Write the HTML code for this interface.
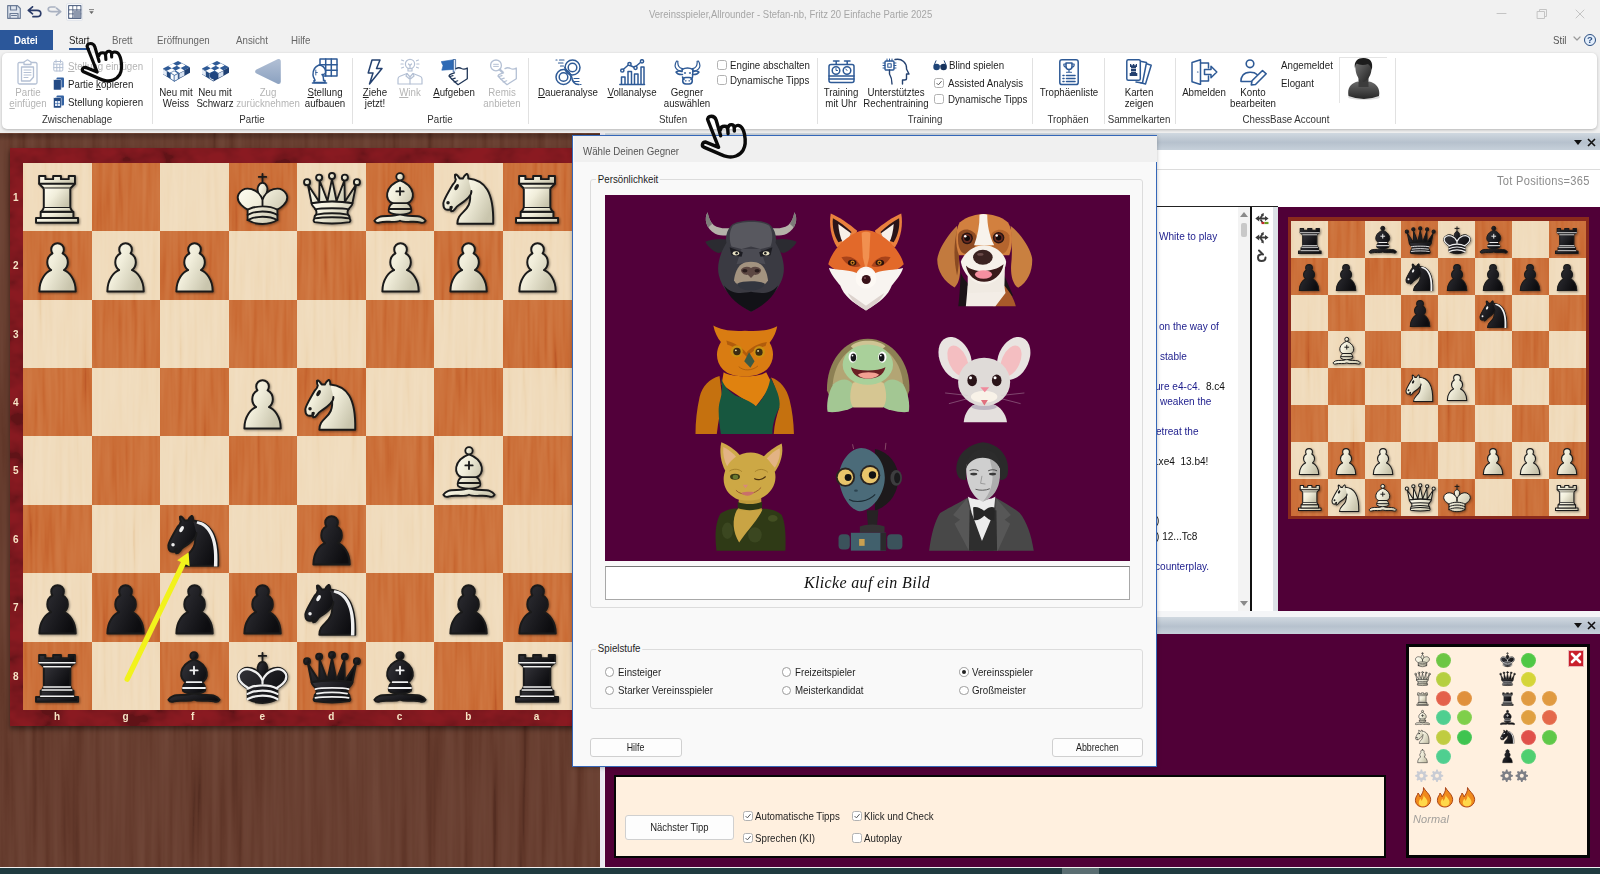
<!DOCTYPE html><html lang="de"><head><meta charset="utf-8"><title>Fritz 20</title><style>
*{box-sizing:border-box}
html,body{margin:0;padding:0;overflow:hidden}
body{width:1600px;height:874px;overflow:hidden;position:relative;background:#f0f0f0;font-family:"Liberation Sans",sans-serif;font-size:11px;color:#1e1e1e}
.a{position:absolute}
.t{position:absolute;white-space:nowrap;line-height:12px;font-size:10.5px;transform-origin:0 50%;transform:scaleX(.925)}
.c{position:absolute;white-space:nowrap;text-align:center;line-height:10.6px;font-size:10.5px;transform:translateX(-50%) scaleX(.925)}
.g{color:#b4b4b4}
.pc{position:absolute;filter:drop-shadow(1px 1.5px 1px rgba(0,0,0,.4))}
.sep{position:absolute;top:58px;width:1px;height:66px;background:#e1e1e1}
.cb{position:absolute;width:10px;height:10px;border:1px solid #9a9a9a;border-radius:2.5px;background:#fff}
.rd{position:absolute;width:9.5px;height:9.5px;border:1px solid #9c9c9c;border-radius:50%;background:#fff}
.btn{position:absolute;border:1px solid #d0d0d0;border-radius:3px;background:#fdfdfd;text-align:center;font-size:10.5px}
.btn span{display:inline-block;transform:scaleX(.84)}
.lab{position:absolute;color:#f6e4c6;font-size:10px;line-height:12px;font-weight:bold}
.nt{position:absolute;white-space:nowrap;font-size:11.5px;line-height:13px;color:#1c1c8c;transform-origin:0 50%;transform:scaleX(.875)}
.hdr{position:absolute;background:linear-gradient(#d0d8e0,#b6c1cd 55%,#c6d0da)}
</style></head><body>
<svg width="0" height="0" style="position:absolute"><defs>
<linearGradient id="wg" x1="0" y1="0" x2="1" y2=".6"><stop offset="0" stop-color="#fffdf2"/><stop offset=".45" stop-color="#f1eedb"/><stop offset="1" stop-color="#c9c5ad"/></linearGradient>
<linearGradient id="kg" x1="0" y1="0" x2="1" y2=".6"><stop offset="0" stop-color="#34343a"/><stop offset="1" stop-color="#0d0d10"/></linearGradient>
<filter id="grain" x="0" y="0" width="100%" height="100%"><feTurbulence type="fractalNoise" baseFrequency="0.11 0.004" numOctaves="3" seed="4"/><feColorMatrix type="matrix" values="1.6 0 0 0 -.3  1.6 0 0 0 -.3  1.6 0 0 0 -.3  0 0 0 0 1"/></filter>
<filter id="grain2" x="0" y="0" width="100%" height="100%"><feTurbulence type="fractalNoise" baseFrequency="0.2 0.012" numOctaves="2" seed="9"/><feColorMatrix type="matrix" values="1.4 0 0 0 -.2  1.4 0 0 0 -.2  1.4 0 0 0 -.2  0 0 0 0 1"/></filter>
<filter id="mottle" x="0" y="0" width="100%" height="100%"><feTurbulence type="fractalNoise" baseFrequency="0.035 0.05" numOctaves="3" seed="7"/><feColorMatrix type="matrix" values="2.2 0 0 0 -.6  2.2 0 0 0 -.6  2.2 0 0 0 -.6  0 0 0 0 1"/></filter>
</defs></svg>
<div class="a" id="wood" style="left:0;top:133px;width:604px;height:734px;background:#62382a"></div>
<div class="a" style="left:0;top:133.5px;width:600px;height:7px;background:linear-gradient(rgba(0,0,0,.28),rgba(0,0,0,0))"></div>
<svg class="a" style="left:0;top:133px;mix-blend-mode:soft-light;opacity:.22" width="604" height="734"><rect width="604" height="734" filter="url(#grain)"/></svg>
<div class="a" style="left:600px;top:133px;width:4.2px;height:734px;background:#ebe9f2"></div>
<div class="a" id="purple" style="left:604.5px;top:133px;width:996px;height:734px;background:#500037"></div>
<div class="a" style="left:0;top:867.5px;width:1600px;height:7px;background:#1f3b40"></div>
<div class="a" style="left:1062px;top:867.5px;width:37px;height:7px;background:#5a6e72"></div>
<div class="a" id="frame" style="left:9.6px;top:147.6px;width:574.7px;height:578.2px;background:#8a1a21;box-shadow:0 3px 5px rgba(0,0,0,.45)"></div>
<svg class="a" style="left:10.3px;top:147.6px;mix-blend-mode:multiply;opacity:.3" width="574" height="578.2"><rect width="574" height="578.2" filter="url(#mottle)"/></svg>
<div class="a" style="left:23.00px;top:162.70px;width:68.85px;height:68.72px;background:#efd9b8"></div><div class="a" style="left:91.55px;top:162.70px;width:68.85px;height:68.72px;background:#c96a33"></div><div class="a" style="left:160.10px;top:162.70px;width:68.85px;height:68.72px;background:#efd9b8"></div><div class="a" style="left:228.65px;top:162.70px;width:68.85px;height:68.72px;background:#c96a33"></div><div class="a" style="left:297.20px;top:162.70px;width:68.85px;height:68.72px;background:#efd9b8"></div><div class="a" style="left:365.75px;top:162.70px;width:68.85px;height:68.72px;background:#c96a33"></div><div class="a" style="left:434.30px;top:162.70px;width:68.85px;height:68.72px;background:#efd9b8"></div><div class="a" style="left:502.85px;top:162.70px;width:68.85px;height:68.72px;background:#c96a33"></div><div class="a" style="left:23.00px;top:231.12px;width:68.85px;height:68.72px;background:#c96a33"></div><div class="a" style="left:91.55px;top:231.12px;width:68.85px;height:68.72px;background:#efd9b8"></div><div class="a" style="left:160.10px;top:231.12px;width:68.85px;height:68.72px;background:#c96a33"></div><div class="a" style="left:228.65px;top:231.12px;width:68.85px;height:68.72px;background:#efd9b8"></div><div class="a" style="left:297.20px;top:231.12px;width:68.85px;height:68.72px;background:#c96a33"></div><div class="a" style="left:365.75px;top:231.12px;width:68.85px;height:68.72px;background:#efd9b8"></div><div class="a" style="left:434.30px;top:231.12px;width:68.85px;height:68.72px;background:#c96a33"></div><div class="a" style="left:502.85px;top:231.12px;width:68.85px;height:68.72px;background:#efd9b8"></div><div class="a" style="left:23.00px;top:299.54px;width:68.85px;height:68.72px;background:#efd9b8"></div><div class="a" style="left:91.55px;top:299.54px;width:68.85px;height:68.72px;background:#c96a33"></div><div class="a" style="left:160.10px;top:299.54px;width:68.85px;height:68.72px;background:#efd9b8"></div><div class="a" style="left:228.65px;top:299.54px;width:68.85px;height:68.72px;background:#c96a33"></div><div class="a" style="left:297.20px;top:299.54px;width:68.85px;height:68.72px;background:#efd9b8"></div><div class="a" style="left:365.75px;top:299.54px;width:68.85px;height:68.72px;background:#c96a33"></div><div class="a" style="left:434.30px;top:299.54px;width:68.85px;height:68.72px;background:#efd9b8"></div><div class="a" style="left:502.85px;top:299.54px;width:68.85px;height:68.72px;background:#c96a33"></div><div class="a" style="left:23.00px;top:367.96px;width:68.85px;height:68.72px;background:#c96a33"></div><div class="a" style="left:91.55px;top:367.96px;width:68.85px;height:68.72px;background:#efd9b8"></div><div class="a" style="left:160.10px;top:367.96px;width:68.85px;height:68.72px;background:#c96a33"></div><div class="a" style="left:228.65px;top:367.96px;width:68.85px;height:68.72px;background:#efd9b8"></div><div class="a" style="left:297.20px;top:367.96px;width:68.85px;height:68.72px;background:#c96a33"></div><div class="a" style="left:365.75px;top:367.96px;width:68.85px;height:68.72px;background:#efd9b8"></div><div class="a" style="left:434.30px;top:367.96px;width:68.85px;height:68.72px;background:#c96a33"></div><div class="a" style="left:502.85px;top:367.96px;width:68.85px;height:68.72px;background:#efd9b8"></div><div class="a" style="left:23.00px;top:436.38px;width:68.85px;height:68.72px;background:#efd9b8"></div><div class="a" style="left:91.55px;top:436.38px;width:68.85px;height:68.72px;background:#c96a33"></div><div class="a" style="left:160.10px;top:436.38px;width:68.85px;height:68.72px;background:#efd9b8"></div><div class="a" style="left:228.65px;top:436.38px;width:68.85px;height:68.72px;background:#c96a33"></div><div class="a" style="left:297.20px;top:436.38px;width:68.85px;height:68.72px;background:#efd9b8"></div><div class="a" style="left:365.75px;top:436.38px;width:68.85px;height:68.72px;background:#c96a33"></div><div class="a" style="left:434.30px;top:436.38px;width:68.85px;height:68.72px;background:#efd9b8"></div><div class="a" style="left:502.85px;top:436.38px;width:68.85px;height:68.72px;background:#c96a33"></div><div class="a" style="left:23.00px;top:504.80px;width:68.85px;height:68.72px;background:#c96a33"></div><div class="a" style="left:91.55px;top:504.80px;width:68.85px;height:68.72px;background:#efd9b8"></div><div class="a" style="left:160.10px;top:504.80px;width:68.85px;height:68.72px;background:#c96a33"></div><div class="a" style="left:228.65px;top:504.80px;width:68.85px;height:68.72px;background:#efd9b8"></div><div class="a" style="left:297.20px;top:504.80px;width:68.85px;height:68.72px;background:#c96a33"></div><div class="a" style="left:365.75px;top:504.80px;width:68.85px;height:68.72px;background:#efd9b8"></div><div class="a" style="left:434.30px;top:504.80px;width:68.85px;height:68.72px;background:#c96a33"></div><div class="a" style="left:502.85px;top:504.80px;width:68.85px;height:68.72px;background:#efd9b8"></div><div class="a" style="left:23.00px;top:573.22px;width:68.85px;height:68.72px;background:#efd9b8"></div><div class="a" style="left:91.55px;top:573.22px;width:68.85px;height:68.72px;background:#c96a33"></div><div class="a" style="left:160.10px;top:573.22px;width:68.85px;height:68.72px;background:#efd9b8"></div><div class="a" style="left:228.65px;top:573.22px;width:68.85px;height:68.72px;background:#c96a33"></div><div class="a" style="left:297.20px;top:573.22px;width:68.85px;height:68.72px;background:#efd9b8"></div><div class="a" style="left:365.75px;top:573.22px;width:68.85px;height:68.72px;background:#c96a33"></div><div class="a" style="left:434.30px;top:573.22px;width:68.85px;height:68.72px;background:#efd9b8"></div><div class="a" style="left:502.85px;top:573.22px;width:68.85px;height:68.72px;background:#c96a33"></div><div class="a" style="left:23.00px;top:641.64px;width:68.85px;height:68.72px;background:#c96a33"></div><div class="a" style="left:91.55px;top:641.64px;width:68.85px;height:68.72px;background:#efd9b8"></div><div class="a" style="left:160.10px;top:641.64px;width:68.85px;height:68.72px;background:#c96a33"></div><div class="a" style="left:228.65px;top:641.64px;width:68.85px;height:68.72px;background:#efd9b8"></div><div class="a" style="left:297.20px;top:641.64px;width:68.85px;height:68.72px;background:#c96a33"></div><div class="a" style="left:365.75px;top:641.64px;width:68.85px;height:68.72px;background:#efd9b8"></div><div class="a" style="left:434.30px;top:641.64px;width:68.85px;height:68.72px;background:#c96a33"></div><div class="a" style="left:502.85px;top:641.64px;width:68.85px;height:68.72px;background:#efd9b8"></div>
<svg class="a" style="left:23px;top:162.7px;mix-blend-mode:soft-light;opacity:.28" width="548.7" height="547.6"><rect width="548.7" height="547.6" filter="url(#grain2)"/></svg>
<div class="lab" style="left:13px;top:191.7px">1</div>
<div class="lab" style="left:13px;top:260.1px">2</div>
<div class="lab" style="left:13px;top:328.5px">3</div>
<div class="lab" style="left:13px;top:397.0px">4</div>
<div class="lab" style="left:13px;top:465.4px">5</div>
<div class="lab" style="left:13px;top:533.8px">6</div>
<div class="lab" style="left:13px;top:602.2px">7</div>
<div class="lab" style="left:13px;top:670.6px">8</div>
<div class="lab" style="left:54.0px;top:711px">h</div>
<div class="lab" style="left:122.5px;top:711px">g</div>
<div class="lab" style="left:191.1px;top:711px">f</div>
<div class="lab" style="left:259.6px;top:711px">e</div>
<div class="lab" style="left:328.2px;top:711px">d</div>
<div class="lab" style="left:396.8px;top:711px">c</div>
<div class="lab" style="left:465.3px;top:711px">b</div>
<div class="lab" style="left:533.8px;top:711px">a</div>
<svg class="pc" style="left:22.2px;top:162.4px" width="70.1" height="70.1" viewBox="0 0 45 45"><g fill="none" fill-rule="evenodd" stroke="#1a1a1a" stroke-width="1.25" stroke-linecap="round" stroke-linejoin="round" ><g fill="url(#wg)" stroke-linecap="butt"><path d="M 9,39 L 36,39 L 36,36 L 9,36 L 9,39 z"/><path d="M 12,36 L 12,32 L 33,32 L 33,36 L 12,36 z"/><path d="M 11,14 L 11,9 L 15,9 L 15,11 L 20,11 L 20,9 L 25,9 L 25,11 L 30,11 L 30,9 L 34,9 L 34,14"/><path d="M 34,14 L 31,17 L 14,17 L 11,14"/><path d="M 31,17 L 31,29.5 L 14,29.5 L 14,17" stroke-linejoin="miter"/><path d="M 31,29.5 L 32.5,32 L 12.5,32 L 14,29.5"/></g><path d="M 11,14 L 34,14" stroke-linejoin="miter"/></g></svg>
<svg class="pc" style="left:229.4px;top:164.9px" width="67.0" height="67.0" viewBox="0 0 45 45"><g fill="none" fill-rule="evenodd" stroke="#1a1a1a" stroke-width="1.25" stroke-linecap="round" stroke-linejoin="round" ><path d="M 22.5,11.63 L 22.5,6" stroke-linejoin="miter"/><path d="M 20,8 L 25,8" stroke-linejoin="miter"/><path d="M 22.5,25 C 22.5,25 27,17.5 25.5,14.5 C 25.5,14.5 24.5,12 22.5,12 C 20.5,12 19.5,14.5 19.5,14.5 C 18,17.5 22.5,25 22.5,25" fill="url(#wg)" stroke-linecap="butt" stroke-linejoin="miter"/><path d="M 12.5,37 C 18,40.5 27,40.5 32.5,37 L 32.5,30 C 32.5,30 41.5,25.5 38.5,19.5 C 34.5,13 25,16 22.5,23.5 L 22.5,27 L 22.5,23.5 C 20,16 10.5,13 6.5,19.5 C 3.5,25.5 12.5,30 12.5,30 L 12.5,37" fill="url(#wg)"/><path d="M 12.5,30 C 18,27 27,27 32.5,30"/><path d="M 12.5,33.5 C 18,30.5 27,30.5 32.5,33.5"/><path d="M 12.5,37 C 18,34 27,34 32.5,37"/></g></svg>
<svg class="pc" style="left:297.5px;top:163.6px" width="68.0" height="68.0" viewBox="0 0 45 45"><g fill="none" fill-rule="evenodd" stroke="#1a1a1a" stroke-width="1.25" stroke-linecap="round" stroke-linejoin="round" ><g fill="url(#wg)"><path d="M 9,26 C 17.5,24.5 30,24.5 36,26 L 38.5,13.5 L 31,25 L 30.7,10.9 L 25.5,24.5 L 22.5,10 L 19.5,24.5 L 14.3,10.9 L 14,25 L 6.5,13.5 L 9,26 z"/><path d="M 9,26 C 9,28 10.5,28 11.5,30 C 12.5,31.5 12.5,31 12,33.5 C 10.5,34.5 11,36 11,36 C 9.5,37.5 11,38.5 11,38.5 C 17.5,39.5 27.5,39.5 34,38.5 C 34,38.5 35.5,37.5 34,36 C 34,36 34.5,34.5 33,33.5 C 32.5,31 32.5,31.5 33.5,30 C 34.5,28 36,28 36,26 C 27.5,24.5 17.5,24.5 9,26 z"/><circle cx="6" cy="12" r="2"/><circle cx="14" cy="9" r="2"/><circle cx="22.5" cy="8" r="2"/><circle cx="31" cy="9" r="2"/><circle cx="39" cy="12" r="2"/></g><path d="M 11.5,30 C 15,29 30,29 33.5,30"/><path d="M 12,33.5 C 18,32.5 27,32.5 33,33.5"/><path d="M 11,36 C 17,35 28,35 34,36"/></g></svg>
<svg class="pc" style="left:367.0px;top:164.9px" width="66.0" height="66.0" viewBox="0 0 45 45"><g fill="none" fill-rule="evenodd" stroke="#1a1a1a" stroke-width="1.25" stroke-linecap="round" stroke-linejoin="round" ><g fill="url(#wg)" stroke-linecap="butt"><path d="M 8.5,35.3 C 12,34.1 19,35.8 22.5,33.2 C 26,35.8 33,34.1 36.5,35.3 C 38,35.8 39.3,36.8 40,38 C 39,39.7 37.5,39.7 36,39.1 C 32.5,37.9 26,39.7 22.5,38 C 19,39.7 12.5,37.9 9,39.1 C 7.5,39.7 6,39.7 5,38 C 5.7,36.8 7,35.8 8.5,35.3 z"/><path d="M 15,32 C 17.5,34.5 27.5,34.5 30,32 C 30.5,30.5 30,30 30,30 C 30,27.5 27.5,26 27.5,26 C 33,24.5 33.5,14.5 22.5,10.5 C 11.5,14.5 12,24.5 17.5,26 C 17.5,26 15,27.5 15,30 C 15,30 14.5,30.5 15,32 z"/><path d="M 25 8 A 2.5 2.5 0 1 1 20,8 A 2.5 2.5 0 1 1 25 8 z"/></g><path d="M 17.5,26 L 27.5,26 M 15,30 L 30,30 M 22.5,15.5 L 22.5,20.5 M 20,18 L 25,18" stroke="#1a1a1a" stroke-linejoin="miter"/></g></svg>
<svg class="pc" style="left:433.5px;top:163.2px" width="70.1" height="70.1" viewBox="0 0 45 45"><g fill="none" fill-rule="evenodd" stroke="#1a1a1a" stroke-width="1.25" stroke-linecap="round" stroke-linejoin="round" ><path d="M 22,10 C 32.5,11 38.5,18 38,39 L 15,39 C 15,30 25,32.5 23,18" fill="url(#wg)"/><path d="M 24,18 C 24.38,20.91 18.45,25.37 16,27 C 13,29 13.18,31.34 11,31 C 9.958,30.06 12.41,27.96 11,28 C 10,28 11.19,29.23 10,30 C 9,30 5.997,31 6,26 C 6,24 12,14 12,14 C 12,14 13.89,12.1 14,10.5 C 13.27,9.506 13.5,8.5 13.5,7.5 C 14.5,6.5 16.5,10 16.5,10 L 18.5,10 C 18.5,10 19.28,8.008 21,7 C 22,7 22,10 22,10" fill="url(#wg)"/><path d="M 9.5 25.5 A 0.5 0.5 0 1 1 8.5,25.5 A 0.5 0.5 0 1 1 9.5 25.5 z" fill="#1a1a1a" stroke="#1a1a1a"/><path d="M 15 15.5 A 0.5 1.5 0 1 1 14,15.5 A 0.5 1.5 0 1 1 15 15.5 z" transform="matrix(0.866,0.5,-0.5,0.866,9.693,-5.173)" fill="#1a1a1a" stroke="#1a1a1a"/></g></svg>
<svg class="pc" style="left:502.1px;top:162.4px" width="70.1" height="70.1" viewBox="0 0 45 45"><g fill="none" fill-rule="evenodd" stroke="#1a1a1a" stroke-width="1.25" stroke-linecap="round" stroke-linejoin="round" ><g fill="url(#wg)" stroke-linecap="butt"><path d="M 9,39 L 36,39 L 36,36 L 9,36 L 9,39 z"/><path d="M 12,36 L 12,32 L 33,32 L 33,36 L 12,36 z"/><path d="M 11,14 L 11,9 L 15,9 L 15,11 L 20,11 L 20,9 L 25,9 L 25,11 L 30,11 L 30,9 L 34,9 L 34,14"/><path d="M 34,14 L 31,17 L 14,17 L 11,14"/><path d="M 31,17 L 31,29.5 L 14,29.5 L 14,17" stroke-linejoin="miter"/><path d="M 31,29.5 L 32.5,32 L 12.5,32 L 14,29.5"/></g><path d="M 11,14 L 34,14" stroke-linejoin="miter"/></g></svg>
<svg class="pc" style="left:21.7px;top:228.7px" width="71.1" height="71.1" viewBox="0 0 45 45"><g fill="none" fill-rule="evenodd" stroke="#1a1a1a" stroke-width="1.25" stroke-linecap="round" stroke-linejoin="round" ><path d="m 22.5,9 c -2.21,0 -4,1.79 -4,4 0,0.89 0.29,1.71 0.78,2.38 C 17.33,16.5 16,18.59 16,21 c 0,2.03 0.94,3.84 2.41,5.03 C 15.41,27.09 11,31.58 11,39.5 H 34 C 34,31.58 29.59,27.09 26.59,26.03 28.06,24.84 29,23.03 29,21 29,18.59 27.67,16.5 25.72,15.38 26.21,14.71 26.5,13.89 26.5,13 c 0,-2.21 -1.79,-4 -4,-4 z" fill="url(#wg)"/></g></svg>
<svg class="pc" style="left:90.3px;top:228.7px" width="71.1" height="71.1" viewBox="0 0 45 45"><g fill="none" fill-rule="evenodd" stroke="#1a1a1a" stroke-width="1.25" stroke-linecap="round" stroke-linejoin="round" ><path d="m 22.5,9 c -2.21,0 -4,1.79 -4,4 0,0.89 0.29,1.71 0.78,2.38 C 17.33,16.5 16,18.59 16,21 c 0,2.03 0.94,3.84 2.41,5.03 C 15.41,27.09 11,31.58 11,39.5 H 34 C 34,31.58 29.59,27.09 26.59,26.03 28.06,24.84 29,23.03 29,21 29,18.59 27.67,16.5 25.72,15.38 26.21,14.71 26.5,13.89 26.5,13 c 0,-2.21 -1.79,-4 -4,-4 z" fill="url(#wg)"/></g></svg>
<svg class="pc" style="left:158.8px;top:228.7px" width="71.1" height="71.1" viewBox="0 0 45 45"><g fill="none" fill-rule="evenodd" stroke="#1a1a1a" stroke-width="1.25" stroke-linecap="round" stroke-linejoin="round" ><path d="m 22.5,9 c -2.21,0 -4,1.79 -4,4 0,0.89 0.29,1.71 0.78,2.38 C 17.33,16.5 16,18.59 16,21 c 0,2.03 0.94,3.84 2.41,5.03 C 15.41,27.09 11,31.58 11,39.5 H 34 C 34,31.58 29.59,27.09 26.59,26.03 28.06,24.84 29,23.03 29,21 29,18.59 27.67,16.5 25.72,15.38 26.21,14.71 26.5,13.89 26.5,13 c 0,-2.21 -1.79,-4 -4,-4 z" fill="url(#wg)"/></g></svg>
<svg class="pc" style="left:364.5px;top:228.7px" width="71.1" height="71.1" viewBox="0 0 45 45"><g fill="none" fill-rule="evenodd" stroke="#1a1a1a" stroke-width="1.25" stroke-linecap="round" stroke-linejoin="round" ><path d="m 22.5,9 c -2.21,0 -4,1.79 -4,4 0,0.89 0.29,1.71 0.78,2.38 C 17.33,16.5 16,18.59 16,21 c 0,2.03 0.94,3.84 2.41,5.03 C 15.41,27.09 11,31.58 11,39.5 H 34 C 34,31.58 29.59,27.09 26.59,26.03 28.06,24.84 29,23.03 29,21 29,18.59 27.67,16.5 25.72,15.38 26.21,14.71 26.5,13.89 26.5,13 c 0,-2.21 -1.79,-4 -4,-4 z" fill="url(#wg)"/></g></svg>
<svg class="pc" style="left:433.0px;top:228.7px" width="71.1" height="71.1" viewBox="0 0 45 45"><g fill="none" fill-rule="evenodd" stroke="#1a1a1a" stroke-width="1.25" stroke-linecap="round" stroke-linejoin="round" ><path d="m 22.5,9 c -2.21,0 -4,1.79 -4,4 0,0.89 0.29,1.71 0.78,2.38 C 17.33,16.5 16,18.59 16,21 c 0,2.03 0.94,3.84 2.41,5.03 C 15.41,27.09 11,31.58 11,39.5 H 34 C 34,31.58 29.59,27.09 26.59,26.03 28.06,24.84 29,23.03 29,21 29,18.59 27.67,16.5 25.72,15.38 26.21,14.71 26.5,13.89 26.5,13 c 0,-2.21 -1.79,-4 -4,-4 z" fill="url(#wg)"/></g></svg>
<svg class="pc" style="left:501.6px;top:228.7px" width="71.1" height="71.1" viewBox="0 0 45 45"><g fill="none" fill-rule="evenodd" stroke="#1a1a1a" stroke-width="1.25" stroke-linecap="round" stroke-linejoin="round" ><path d="m 22.5,9 c -2.21,0 -4,1.79 -4,4 0,0.89 0.29,1.71 0.78,2.38 C 17.33,16.5 16,18.59 16,21 c 0,2.03 0.94,3.84 2.41,5.03 C 15.41,27.09 11,31.58 11,39.5 H 34 C 34,31.58 29.59,27.09 26.59,26.03 28.06,24.84 29,23.03 29,21 29,18.59 27.67,16.5 25.72,15.38 26.21,14.71 26.5,13.89 26.5,13 c 0,-2.21 -1.79,-4 -4,-4 z" fill="url(#wg)"/></g></svg>
<svg class="pc" style="left:227.4px;top:365.6px" width="71.1" height="71.1" viewBox="0 0 45 45"><g fill="none" fill-rule="evenodd" stroke="#1a1a1a" stroke-width="1.25" stroke-linecap="round" stroke-linejoin="round" ><path d="m 22.5,9 c -2.21,0 -4,1.79 -4,4 0,0.89 0.29,1.71 0.78,2.38 C 17.33,16.5 16,18.59 16,21 c 0,2.03 0.94,3.84 2.41,5.03 C 15.41,27.09 11,31.58 11,39.5 H 34 C 34,31.58 29.59,27.09 26.59,26.03 28.06,24.84 29,23.03 29,21 29,18.59 27.67,16.5 25.72,15.38 26.21,14.71 26.5,13.89 26.5,13 c 0,-2.21 -1.79,-4 -4,-4 z" fill="url(#wg)"/></g></svg>
<svg class="pc" style="left:296.4px;top:368.5px" width="70.1" height="70.1" viewBox="0 0 45 45"><g fill="none" fill-rule="evenodd" stroke="#1a1a1a" stroke-width="1.25" stroke-linecap="round" stroke-linejoin="round" ><path d="M 22,10 C 32.5,11 38.5,18 38,39 L 15,39 C 15,30 25,32.5 23,18" fill="url(#wg)"/><path d="M 24,18 C 24.38,20.91 18.45,25.37 16,27 C 13,29 13.18,31.34 11,31 C 9.958,30.06 12.41,27.96 11,28 C 10,28 11.19,29.23 10,30 C 9,30 5.997,31 6,26 C 6,24 12,14 12,14 C 12,14 13.89,12.1 14,10.5 C 13.27,9.506 13.5,8.5 13.5,7.5 C 14.5,6.5 16.5,10 16.5,10 L 18.5,10 C 18.5,10 19.28,8.008 21,7 C 22,7 22,10 22,10" fill="url(#wg)"/><path d="M 9.5 25.5 A 0.5 0.5 0 1 1 8.5,25.5 A 0.5 0.5 0 1 1 9.5 25.5 z" fill="#1a1a1a" stroke="#1a1a1a"/><path d="M 15 15.5 A 0.5 1.5 0 1 1 14,15.5 A 0.5 1.5 0 1 1 15 15.5 z" transform="matrix(0.866,0.5,-0.5,0.866,9.693,-5.173)" fill="#1a1a1a" stroke="#1a1a1a"/></g></svg>
<svg class="pc" style="left:435.6px;top:438.6px" width="66.0" height="66.0" viewBox="0 0 45 45"><g fill="none" fill-rule="evenodd" stroke="#1a1a1a" stroke-width="1.25" stroke-linecap="round" stroke-linejoin="round" ><g fill="url(#wg)" stroke-linecap="butt"><path d="M 8.5,35.3 C 12,34.1 19,35.8 22.5,33.2 C 26,35.8 33,34.1 36.5,35.3 C 38,35.8 39.3,36.8 40,38 C 39,39.7 37.5,39.7 36,39.1 C 32.5,37.9 26,39.7 22.5,38 C 19,39.7 12.5,37.9 9,39.1 C 7.5,39.7 6,39.7 5,38 C 5.7,36.8 7,35.8 8.5,35.3 z"/><path d="M 15,32 C 17.5,34.5 27.5,34.5 30,32 C 30.5,30.5 30,30 30,30 C 30,27.5 27.5,26 27.5,26 C 33,24.5 33.5,14.5 22.5,10.5 C 11.5,14.5 12,24.5 17.5,26 C 17.5,26 15,27.5 15,30 C 15,30 14.5,30.5 15,32 z"/><path d="M 25 8 A 2.5 2.5 0 1 1 20,8 A 2.5 2.5 0 1 1 25 8 z"/></g><path d="M 17.5,26 L 27.5,26 M 15,30 L 30,30 M 22.5,15.5 L 22.5,20.5 M 20,18 L 25,18" stroke="#1a1a1a" stroke-linejoin="miter"/></g></svg>
<svg class="pc" style="left:159.3px;top:505.3px" width="70.1" height="70.1" viewBox="0 0 45 45"><g fill="none" fill-rule="evenodd" stroke="#1a1a1a" stroke-width="1.25" stroke-linecap="round" stroke-linejoin="round" ><path d="M 22,10 C 32.5,11 38.5,18 38,39 L 15,39 C 15,30 25,32.5 23,18" fill="url(#kg)"/><path d="M 24,18 C 24.38,20.91 18.45,25.37 16,27 C 13,29 13.18,31.34 11,31 C 9.958,30.06 12.41,27.96 11,28 C 10,28 11.19,29.23 10,30 C 9,30 5.997,31 6,26 C 6,24 12,14 12,14 C 12,14 13.89,12.1 14,10.5 C 13.27,9.506 13.5,8.5 13.5,7.5 C 14.5,6.5 16.5,10 16.5,10 L 18.5,10 C 18.5,10 19.28,8.008 21,7 C 22,7 22,10 22,10" fill="url(#kg)"/><path d="M 9.5 25.5 A 0.5 0.5 0 1 1 8.5,25.5 A 0.5 0.5 0 1 1 9.5 25.5 z" fill="#f0f0f0" stroke="#f0f0f0"/><path d="M 15 15.5 A 0.5 1.5 0 1 1 14,15.5 A 0.5 1.5 0 1 1 15 15.5 z" transform="matrix(0.866,0.5,-0.5,0.866,9.693,-5.173)" fill="#f0f0f0" stroke="#f0f0f0"/><path d="M 24.55,10.4 L 24.1,11.85 L 24.6,12 C 27.75,13 30.25,14.49 32.5,18.75 C 34.75,23.01 35.75,29.06 35.25,39 L 35.2,39.5 L 37.45,39.5 L 37.5,39 C 38,28.94 36.62,22.15 34.25,17.66 C 31.88,13.17 28.46,11.02 25.06,10.5 L 24.55,10.4 z" fill="#f0f0f0" stroke="none"/></g></svg>
<svg class="pc" style="left:295.9px;top:502.4px" width="71.1" height="71.1" viewBox="0 0 45 45"><g fill="none" fill-rule="evenodd" stroke="#1a1a1a" stroke-width="1.25" stroke-linecap="round" stroke-linejoin="round" ><path d="m 22.5,9 c -2.21,0 -4,1.79 -4,4 0,0.89 0.29,1.71 0.78,2.38 C 17.33,16.5 16,18.59 16,21 c 0,2.03 0.94,3.84 2.41,5.03 C 15.41,27.09 11,31.58 11,39.5 H 34 C 34,31.58 29.59,27.09 26.59,26.03 28.06,24.84 29,23.03 29,21 29,18.59 27.67,16.5 25.72,15.38 26.21,14.71 26.5,13.89 26.5,13 c 0,-2.21 -1.79,-4 -4,-4 z" fill="url(#kg)"/></g></svg>
<svg class="pc" style="left:21.7px;top:570.8px" width="71.1" height="71.1" viewBox="0 0 45 45"><g fill="none" fill-rule="evenodd" stroke="#1a1a1a" stroke-width="1.25" stroke-linecap="round" stroke-linejoin="round" ><path d="m 22.5,9 c -2.21,0 -4,1.79 -4,4 0,0.89 0.29,1.71 0.78,2.38 C 17.33,16.5 16,18.59 16,21 c 0,2.03 0.94,3.84 2.41,5.03 C 15.41,27.09 11,31.58 11,39.5 H 34 C 34,31.58 29.59,27.09 26.59,26.03 28.06,24.84 29,23.03 29,21 29,18.59 27.67,16.5 25.72,15.38 26.21,14.71 26.5,13.89 26.5,13 c 0,-2.21 -1.79,-4 -4,-4 z" fill="url(#kg)"/></g></svg>
<svg class="pc" style="left:90.3px;top:570.8px" width="71.1" height="71.1" viewBox="0 0 45 45"><g fill="none" fill-rule="evenodd" stroke="#1a1a1a" stroke-width="1.25" stroke-linecap="round" stroke-linejoin="round" ><path d="m 22.5,9 c -2.21,0 -4,1.79 -4,4 0,0.89 0.29,1.71 0.78,2.38 C 17.33,16.5 16,18.59 16,21 c 0,2.03 0.94,3.84 2.41,5.03 C 15.41,27.09 11,31.58 11,39.5 H 34 C 34,31.58 29.59,27.09 26.59,26.03 28.06,24.84 29,23.03 29,21 29,18.59 27.67,16.5 25.72,15.38 26.21,14.71 26.5,13.89 26.5,13 c 0,-2.21 -1.79,-4 -4,-4 z" fill="url(#kg)"/></g></svg>
<svg class="pc" style="left:158.8px;top:570.8px" width="71.1" height="71.1" viewBox="0 0 45 45"><g fill="none" fill-rule="evenodd" stroke="#1a1a1a" stroke-width="1.25" stroke-linecap="round" stroke-linejoin="round" ><path d="m 22.5,9 c -2.21,0 -4,1.79 -4,4 0,0.89 0.29,1.71 0.78,2.38 C 17.33,16.5 16,18.59 16,21 c 0,2.03 0.94,3.84 2.41,5.03 C 15.41,27.09 11,31.58 11,39.5 H 34 C 34,31.58 29.59,27.09 26.59,26.03 28.06,24.84 29,23.03 29,21 29,18.59 27.67,16.5 25.72,15.38 26.21,14.71 26.5,13.89 26.5,13 c 0,-2.21 -1.79,-4 -4,-4 z" fill="url(#kg)"/></g></svg>
<svg class="pc" style="left:227.4px;top:570.8px" width="71.1" height="71.1" viewBox="0 0 45 45"><g fill="none" fill-rule="evenodd" stroke="#1a1a1a" stroke-width="1.25" stroke-linecap="round" stroke-linejoin="round" ><path d="m 22.5,9 c -2.21,0 -4,1.79 -4,4 0,0.89 0.29,1.71 0.78,2.38 C 17.33,16.5 16,18.59 16,21 c 0,2.03 0.94,3.84 2.41,5.03 C 15.41,27.09 11,31.58 11,39.5 H 34 C 34,31.58 29.59,27.09 26.59,26.03 28.06,24.84 29,23.03 29,21 29,18.59 27.67,16.5 25.72,15.38 26.21,14.71 26.5,13.89 26.5,13 c 0,-2.21 -1.79,-4 -4,-4 z" fill="url(#kg)"/></g></svg>
<svg class="pc" style="left:296.4px;top:573.7px" width="70.1" height="70.1" viewBox="0 0 45 45"><g fill="none" fill-rule="evenodd" stroke="#1a1a1a" stroke-width="1.25" stroke-linecap="round" stroke-linejoin="round" ><path d="M 22,10 C 32.5,11 38.5,18 38,39 L 15,39 C 15,30 25,32.5 23,18" fill="url(#kg)"/><path d="M 24,18 C 24.38,20.91 18.45,25.37 16,27 C 13,29 13.18,31.34 11,31 C 9.958,30.06 12.41,27.96 11,28 C 10,28 11.19,29.23 10,30 C 9,30 5.997,31 6,26 C 6,24 12,14 12,14 C 12,14 13.89,12.1 14,10.5 C 13.27,9.506 13.5,8.5 13.5,7.5 C 14.5,6.5 16.5,10 16.5,10 L 18.5,10 C 18.5,10 19.28,8.008 21,7 C 22,7 22,10 22,10" fill="url(#kg)"/><path d="M 9.5 25.5 A 0.5 0.5 0 1 1 8.5,25.5 A 0.5 0.5 0 1 1 9.5 25.5 z" fill="#f0f0f0" stroke="#f0f0f0"/><path d="M 15 15.5 A 0.5 1.5 0 1 1 14,15.5 A 0.5 1.5 0 1 1 15 15.5 z" transform="matrix(0.866,0.5,-0.5,0.866,9.693,-5.173)" fill="#f0f0f0" stroke="#f0f0f0"/><path d="M 24.55,10.4 L 24.1,11.85 L 24.6,12 C 27.75,13 30.25,14.49 32.5,18.75 C 34.75,23.01 35.75,29.06 35.25,39 L 35.2,39.5 L 37.45,39.5 L 37.5,39 C 38,28.94 36.62,22.15 34.25,17.66 C 31.88,13.17 28.46,11.02 25.06,10.5 L 24.55,10.4 z" fill="#f0f0f0" stroke="none"/></g></svg>
<svg class="pc" style="left:433.0px;top:570.8px" width="71.1" height="71.1" viewBox="0 0 45 45"><g fill="none" fill-rule="evenodd" stroke="#1a1a1a" stroke-width="1.25" stroke-linecap="round" stroke-linejoin="round" ><path d="m 22.5,9 c -2.21,0 -4,1.79 -4,4 0,0.89 0.29,1.71 0.78,2.38 C 17.33,16.5 16,18.59 16,21 c 0,2.03 0.94,3.84 2.41,5.03 C 15.41,27.09 11,31.58 11,39.5 H 34 C 34,31.58 29.59,27.09 26.59,26.03 28.06,24.84 29,23.03 29,21 29,18.59 27.67,16.5 25.72,15.38 26.21,14.71 26.5,13.89 26.5,13 c 0,-2.21 -1.79,-4 -4,-4 z" fill="url(#kg)"/></g></svg>
<svg class="pc" style="left:501.6px;top:570.8px" width="71.1" height="71.1" viewBox="0 0 45 45"><g fill="none" fill-rule="evenodd" stroke="#1a1a1a" stroke-width="1.25" stroke-linecap="round" stroke-linejoin="round" ><path d="m 22.5,9 c -2.21,0 -4,1.79 -4,4 0,0.89 0.29,1.71 0.78,2.38 C 17.33,16.5 16,18.59 16,21 c 0,2.03 0.94,3.84 2.41,5.03 C 15.41,27.09 11,31.58 11,39.5 H 34 C 34,31.58 29.59,27.09 26.59,26.03 28.06,24.84 29,23.03 29,21 29,18.59 27.67,16.5 25.72,15.38 26.21,14.71 26.5,13.89 26.5,13 c 0,-2.21 -1.79,-4 -4,-4 z" fill="url(#kg)"/></g></svg>
<svg class="pc" style="left:22.2px;top:641.3px" width="70.1" height="70.1" viewBox="0 0 45 45"><g fill="none" fill-rule="evenodd" stroke="#1a1a1a" stroke-width="1.25" stroke-linecap="round" stroke-linejoin="round" ><g fill="url(#kg)" stroke-linecap="butt"><path d="M 9,39 L 36,39 L 36,36 L 9,36 L 9,39 z"/><path d="M 12.5,32 L 14,29.5 L 31,29.5 L 32.5,32 L 12.5,32 z"/><path d="M 12,36 L 12,32 L 33,32 L 33,36 L 12,36 z"/><path d="M 14,29.5 L 14,16.5 L 31,16.5 L 31,29.5 L 14,29.5 z" stroke-linejoin="miter"/><path d="M 14,16.5 L 11,14 L 34,14 L 31,16.5 L 14,16.5 z"/><path d="M 11,14 L 11,9 L 15,9 L 15,11 L 20,11 L 20,9 L 25,9 L 25,11 L 30,11 L 30,9 L 34,9 L 34,14 L 11,14 z"/></g><g stroke="#f0f0f0" stroke-width="1" stroke-linejoin="miter"><path d="M 12,35.5 L 33,35.5"/><path d="M 13,31.5 L 32,31.5"/><path d="M 14,29.5 L 31,29.5"/><path d="M 14,16.5 L 31,16.5"/><path d="M 11,14 L 34,14"/></g></g></svg>
<svg class="pc" style="left:161.4px;top:643.9px" width="66.0" height="66.0" viewBox="0 0 45 45"><g fill="none" fill-rule="evenodd" stroke="#1a1a1a" stroke-width="1.25" stroke-linecap="round" stroke-linejoin="round" ><g fill="url(#kg)" stroke-linecap="butt"><path d="M 8.5,35.3 C 12,34.1 19,35.8 22.5,33.2 C 26,35.8 33,34.1 36.5,35.3 C 38,35.8 39.3,36.8 40,38 C 39,39.7 37.5,39.7 36,39.1 C 32.5,37.9 26,39.7 22.5,38 C 19,39.7 12.5,37.9 9,39.1 C 7.5,39.7 6,39.7 5,38 C 5.7,36.8 7,35.8 8.5,35.3 z"/><path d="M 15,32 C 17.5,34.5 27.5,34.5 30,32 C 30.5,30.5 30,30 30,30 C 30,27.5 27.5,26 27.5,26 C 33,24.5 33.5,14.5 22.5,10.5 C 11.5,14.5 12,24.5 17.5,26 C 17.5,26 15,27.5 15,30 C 15,30 14.5,30.5 15,32 z"/><path d="M 25 8 A 2.5 2.5 0 1 1 20,8 A 2.5 2.5 0 1 1 25 8 z"/></g><path d="M 17.5,26 L 27.5,26 M 15,30 L 30,30 M 22.5,15.5 L 22.5,20.5 M 20,18 L 25,18" stroke="#f0f0f0" stroke-linejoin="miter"/></g></svg>
<svg class="pc" style="left:229.4px;top:643.9px" width="67.0" height="67.0" viewBox="0 0 45 45"><g fill="none" fill-rule="evenodd" stroke="#1a1a1a" stroke-width="1.25" stroke-linecap="round" stroke-linejoin="round" ><path d="M 22.5,11.63 L 22.5,6" stroke-linejoin="miter"/><path d="M 20,8 L 25,8" stroke-linejoin="miter"/><path d="M 22.5,25 C 22.5,25 27,17.5 25.5,14.5 C 25.5,14.5 24.5,12 22.5,12 C 20.5,12 19.5,14.5 19.5,14.5 C 18,17.5 22.5,25 22.5,25" fill="url(#kg)" stroke-linecap="butt" stroke-linejoin="miter"/><path d="M 12.5,37 C 18,40.5 27,40.5 32.5,37 L 32.5,30 C 32.5,30 41.5,25.5 38.5,19.5 C 34.5,13 25,16 22.5,23.5 L 22.5,27 L 22.5,23.5 C 20,16 10.5,13 6.5,19.5 C 3.5,25.5 12.5,30 12.5,30 L 12.5,37" fill="url(#kg)"/><g stroke="#f0f0f0" stroke-width="1.5"><path d="M 32,29.5 C 32,29.5 40.5,25.5 38.03,19.85 C 34.15,14 25,18 22.5,24.5 L 22.5,26.6 L 22.5,24.5 C 20,18 10.85,14 6.97,19.85 C 4.5,25.5 13,29.5 13,29.5"/><path d="M 12.5,30 C 18,27 27,27 32.5,30 M 12.5,33.5 C 18,30.5 27,30.5 32.5,33.5 M 12.5,37 C 18,34 27,34 32.5,37"/></g></g></svg>
<svg class="pc" style="left:297.5px;top:642.5px" width="68.0" height="68.0" viewBox="0 0 45 45"><g fill="none" fill-rule="evenodd" stroke="#1a1a1a" stroke-width="1.25" stroke-linecap="round" stroke-linejoin="round" ><g fill="url(#kg)"><path d="M 9,26 C 17.5,24.5 30,24.5 36,26 L 38.5,13.5 L 31,25 L 30.7,10.9 L 25.5,24.5 L 22.5,10 L 19.5,24.5 L 14.3,10.9 L 14,25 L 6.5,13.5 L 9,26 z" stroke-linecap="butt"/><path d="m 9,26 c 0,2 1.5,2 2.5,4 1,1.5 1,1 0.5,3.5 -1.5,1 -1,2.5 -1,2.5 -1.5,1.5 0,2.5 0,2.5 6.5,1 16.5,1 23,0 0,0 1.5,-1 0,-2.5 0,0 0.5,-1.5 -1,-2.5 -0.5,-2.5 -0.5,-2 0.5,-3.5 1,-2 2.5,-2 2.5,-4 -8.5,-1.5 -18.5,-1.5 -27,0 z"/><circle cx="6" cy="12" r="2"/><circle cx="14" cy="9" r="2"/><circle cx="22.5" cy="8" r="2"/><circle cx="31" cy="9" r="2"/><circle cx="39" cy="12" r="2"/></g><g stroke="#f0f0f0" stroke-width="1.1"><path d="M 11.5,30.5 C 15,29.5 30,29.5 33.5,30.5"/><path d="M 12.5,33.5 C 18,32.6 27,32.6 32.5,33.5"/><path d="M 11.5,36.3 C 17,35.4 28,35.4 33.5,36.3"/></g></g></svg>
<svg class="pc" style="left:367.0px;top:643.9px" width="66.0" height="66.0" viewBox="0 0 45 45"><g fill="none" fill-rule="evenodd" stroke="#1a1a1a" stroke-width="1.25" stroke-linecap="round" stroke-linejoin="round" ><g fill="url(#kg)" stroke-linecap="butt"><path d="M 8.5,35.3 C 12,34.1 19,35.8 22.5,33.2 C 26,35.8 33,34.1 36.5,35.3 C 38,35.8 39.3,36.8 40,38 C 39,39.7 37.5,39.7 36,39.1 C 32.5,37.9 26,39.7 22.5,38 C 19,39.7 12.5,37.9 9,39.1 C 7.5,39.7 6,39.7 5,38 C 5.7,36.8 7,35.8 8.5,35.3 z"/><path d="M 15,32 C 17.5,34.5 27.5,34.5 30,32 C 30.5,30.5 30,30 30,30 C 30,27.5 27.5,26 27.5,26 C 33,24.5 33.5,14.5 22.5,10.5 C 11.5,14.5 12,24.5 17.5,26 C 17.5,26 15,27.5 15,30 C 15,30 14.5,30.5 15,32 z"/><path d="M 25 8 A 2.5 2.5 0 1 1 20,8 A 2.5 2.5 0 1 1 25 8 z"/></g><path d="M 17.5,26 L 27.5,26 M 15,30 L 30,30 M 22.5,15.5 L 22.5,20.5 M 20,18 L 25,18" stroke="#f0f0f0" stroke-linejoin="miter"/></g></svg>
<svg class="pc" style="left:502.1px;top:641.3px" width="70.1" height="70.1" viewBox="0 0 45 45"><g fill="none" fill-rule="evenodd" stroke="#1a1a1a" stroke-width="1.25" stroke-linecap="round" stroke-linejoin="round" ><g fill="url(#kg)" stroke-linecap="butt"><path d="M 9,39 L 36,39 L 36,36 L 9,36 L 9,39 z"/><path d="M 12.5,32 L 14,29.5 L 31,29.5 L 32.5,32 L 12.5,32 z"/><path d="M 12,36 L 12,32 L 33,32 L 33,36 L 12,36 z"/><path d="M 14,29.5 L 14,16.5 L 31,16.5 L 31,29.5 L 14,29.5 z" stroke-linejoin="miter"/><path d="M 14,16.5 L 11,14 L 34,14 L 31,16.5 L 14,16.5 z"/><path d="M 11,14 L 11,9 L 15,9 L 15,11 L 20,11 L 20,9 L 25,9 L 25,11 L 30,11 L 30,9 L 34,9 L 34,14 L 11,14 z"/></g><g stroke="#f0f0f0" stroke-width="1" stroke-linejoin="miter"><path d="M 12,35.5 L 33,35.5"/><path d="M 13,31.5 L 32,31.5"/><path d="M 14,29.5 L 31,29.5"/><path d="M 14,16.5 L 31,16.5"/><path d="M 11,14 L 34,14"/></g></g></svg>
<svg class="a" style="left:0;top:0" width="600" height="874"><line x1="127.2" y1="679.1" x2="183.6" y2="562.6" stroke="#f2f21c" stroke-width="5.4" stroke-linecap="round"/><polygon points="188.6,552.3 189.6,566.2 177.2,560.2" fill="#f2f21c"/></svg>
<div class="hdr" style="left:604.5px;top:133px;width:996px;height:16.5px"></div>
<div class="a" style="left:604.5px;top:149.5px;width:996px;height:57px;background:#fff"></div>
<div class="a" style="left:604.5px;top:169px;width:996px;height:1px;background:#dcdcdc"></div>
<div class="t" style="left:1497px;top:175px;font-size:12px;color:#8c8c8c;letter-spacing:.3px">Tot Positions=365</div>
<div class="a" style="left:604.5px;top:206.5px;width:646px;height:404px;background:#fff"></div>
<div class="a" style="left:1250px;top:206.5px;width:2px;height:404px;background:#111"></div>
<div class="a" style="left:1252px;top:206.5px;width:21px;height:404px;background:#fff"></div>
<div class="a" style="left:1273px;top:206.5px;width:4.8px;height:404px;background:#dde2e7"></div>
<div class="a" style="left:1238px;top:206.5px;width:12px;height:404px;background:#f3f3f3"></div>
<div class="a" style="left:1241px;top:223px;width:6px;height:14px;background:#c8c8c8;border-radius:2px"></div>
<div class="a" style="left:1240px;top:212px;width:0;height:0;border-left:4px solid transparent;border-right:4px solid transparent;border-bottom:5px solid #8a8a8a"></div>
<div class="a" style="left:1240px;top:601px;width:0;height:0;border-left:4px solid transparent;border-right:4px solid transparent;border-top:5px solid #8a8a8a"></div>
<div class="a" style="left:604.5px;top:206px;width:673.5px;height:1.2px;background:#222"></div>
<svg class="a" style="left:1255px;top:213px" width="14" height="14" viewBox="0 0 14 14"><path d="M2 5.5H11.5" stroke="#3a3a3a" stroke-width="1.9" fill="none"/><path d="M.3 5.5L4.2 2.6V8.4ZM13.6 5.5L10 2.9V8.1Z" fill="#3a3a3a"/><path d="M5.5 5L7.8 1.5" stroke="#3a3a3a" stroke-width="1.8"/><path d="M8.8 0L8.5 3.3L5.9 1.3Z" fill="#3a3a3a"/><path d="M5.5 6.5L7.5 9.5" stroke="#3a3a3a" stroke-width="1.6"/><path d="M6.5 10H9.5" stroke="#c0282c" stroke-width="2.2"/><path d="M9.5 10H13.5" stroke="#6a9a1c" stroke-width="2.2"/></svg>
<svg class="a" style="left:1255px;top:232px" width="14" height="14" viewBox="0 0 14 14"><path d="M2 5.5H11.5" stroke="#3a3a3a" stroke-width="1.9" fill="none"/><path d="M.3 5.5L4.2 2.6V8.4ZM13.6 5.5L10 2.9V8.1Z" fill="#3a3a3a"/><path d="M5.5 5L7.8 1.5" stroke="#3a3a3a" stroke-width="1.8"/><path d="M8.8 0L8.5 3.3L5.9 1.3Z" fill="#3a3a3a"/><path d="M5.5 6L7.8 9.8" stroke="#3a3a3a" stroke-width="1.8"/><path d="M8.8 11.5L8.5 8.2L5.9 10.2Z" fill="#3a3a3a"/></svg>
<svg class="a" style="left:1256px;top:249px" width="13" height="13" viewBox="0 0 13 13"><path d="M3 1.5L7 5.5M9.5 8.5C9.5 11 7.5 12 5.5 12C3.5 12 2 10.5 2 8.5C2 6.5 3.5 5.5 5 5.5" stroke="#3c3c3c" stroke-width="2" fill="none" stroke-linecap="round"/></svg>
<div class="nt" style="left:1159px;top:230px">White to play</div>
<div class="nt" style="left:1159px;top:320px">on the way of</div>
<div class="nt" style="left:1160px;top:350px">stable</div>
<div class="nt" style="left:1160px;top:395px">weaken the</div>
<div class="nt" style="left:1156px;top:425px">etreat the</div>
<div class="nt" style="left:1155px;top:560px">counterplay.</div>
<div class="nt" style="left:1155px;top:380px">ure e4-c4. <span style="color:#111">&nbsp;8.c4</span></div>
<div class="nt" style="left:1153px;top:455px;color:#111">Lxe4 &nbsp;13.b4!</div>
<div class="nt" style="left:1156px;top:514px;color:#111">)</div>
<div class="nt" style="left:1156px;top:530px;color:#111">) 12...Tc8</div>
<div class="a" style="left:604.5px;top:610.5px;width:996px;height:6px;background:#f4f5f7"></div>
<div class="hdr" style="left:604.5px;top:616.5px;width:996px;height:17px"></div>
<div class="a" style="left:1574px;top:140px;width:0;height:0;border-left:4px solid transparent;border-right:4px solid transparent;border-top:5px solid #111"></div>
<svg class="a" style="left:1587px;top:138px" width="9" height="9"><path d="M1 1L8 8M8 1L1 8" stroke="#111" stroke-width="1.6"/></svg>
<div class="a" style="left:1574px;top:623px;width:0;height:0;border-left:4px solid transparent;border-right:4px solid transparent;border-top:5px solid #111"></div>
<svg class="a" style="left:1587px;top:621px" width="9" height="9"><path d="M1 1L8 8M8 1L1 8" stroke="#111" stroke-width="1.6"/></svg>
<div class="a" style="left:1288px;top:217px;width:300.5px;height:301.5px;background:#8a2a1c"></div>
<div class="a" style="left:1291.00px;top:221.00px;width:37.10px;height:37.10px;background:#efd9b8"></div><div class="a" style="left:1327.80px;top:221.00px;width:37.10px;height:37.10px;background:#c96a33"></div><div class="a" style="left:1364.60px;top:221.00px;width:37.10px;height:37.10px;background:#efd9b8"></div><div class="a" style="left:1401.40px;top:221.00px;width:37.10px;height:37.10px;background:#c96a33"></div><div class="a" style="left:1438.20px;top:221.00px;width:37.10px;height:37.10px;background:#efd9b8"></div><div class="a" style="left:1475.00px;top:221.00px;width:37.10px;height:37.10px;background:#c96a33"></div><div class="a" style="left:1511.80px;top:221.00px;width:37.10px;height:37.10px;background:#efd9b8"></div><div class="a" style="left:1548.60px;top:221.00px;width:37.10px;height:37.10px;background:#c96a33"></div><div class="a" style="left:1291.00px;top:257.80px;width:37.10px;height:37.10px;background:#c96a33"></div><div class="a" style="left:1327.80px;top:257.80px;width:37.10px;height:37.10px;background:#efd9b8"></div><div class="a" style="left:1364.60px;top:257.80px;width:37.10px;height:37.10px;background:#c96a33"></div><div class="a" style="left:1401.40px;top:257.80px;width:37.10px;height:37.10px;background:#efd9b8"></div><div class="a" style="left:1438.20px;top:257.80px;width:37.10px;height:37.10px;background:#c96a33"></div><div class="a" style="left:1475.00px;top:257.80px;width:37.10px;height:37.10px;background:#efd9b8"></div><div class="a" style="left:1511.80px;top:257.80px;width:37.10px;height:37.10px;background:#c96a33"></div><div class="a" style="left:1548.60px;top:257.80px;width:37.10px;height:37.10px;background:#efd9b8"></div><div class="a" style="left:1291.00px;top:294.60px;width:37.10px;height:37.10px;background:#efd9b8"></div><div class="a" style="left:1327.80px;top:294.60px;width:37.10px;height:37.10px;background:#c96a33"></div><div class="a" style="left:1364.60px;top:294.60px;width:37.10px;height:37.10px;background:#efd9b8"></div><div class="a" style="left:1401.40px;top:294.60px;width:37.10px;height:37.10px;background:#c96a33"></div><div class="a" style="left:1438.20px;top:294.60px;width:37.10px;height:37.10px;background:#efd9b8"></div><div class="a" style="left:1475.00px;top:294.60px;width:37.10px;height:37.10px;background:#c96a33"></div><div class="a" style="left:1511.80px;top:294.60px;width:37.10px;height:37.10px;background:#efd9b8"></div><div class="a" style="left:1548.60px;top:294.60px;width:37.10px;height:37.10px;background:#c96a33"></div><div class="a" style="left:1291.00px;top:331.40px;width:37.10px;height:37.10px;background:#c96a33"></div><div class="a" style="left:1327.80px;top:331.40px;width:37.10px;height:37.10px;background:#efd9b8"></div><div class="a" style="left:1364.60px;top:331.40px;width:37.10px;height:37.10px;background:#c96a33"></div><div class="a" style="left:1401.40px;top:331.40px;width:37.10px;height:37.10px;background:#efd9b8"></div><div class="a" style="left:1438.20px;top:331.40px;width:37.10px;height:37.10px;background:#c96a33"></div><div class="a" style="left:1475.00px;top:331.40px;width:37.10px;height:37.10px;background:#efd9b8"></div><div class="a" style="left:1511.80px;top:331.40px;width:37.10px;height:37.10px;background:#c96a33"></div><div class="a" style="left:1548.60px;top:331.40px;width:37.10px;height:37.10px;background:#efd9b8"></div><div class="a" style="left:1291.00px;top:368.20px;width:37.10px;height:37.10px;background:#efd9b8"></div><div class="a" style="left:1327.80px;top:368.20px;width:37.10px;height:37.10px;background:#c96a33"></div><div class="a" style="left:1364.60px;top:368.20px;width:37.10px;height:37.10px;background:#efd9b8"></div><div class="a" style="left:1401.40px;top:368.20px;width:37.10px;height:37.10px;background:#c96a33"></div><div class="a" style="left:1438.20px;top:368.20px;width:37.10px;height:37.10px;background:#efd9b8"></div><div class="a" style="left:1475.00px;top:368.20px;width:37.10px;height:37.10px;background:#c96a33"></div><div class="a" style="left:1511.80px;top:368.20px;width:37.10px;height:37.10px;background:#efd9b8"></div><div class="a" style="left:1548.60px;top:368.20px;width:37.10px;height:37.10px;background:#c96a33"></div><div class="a" style="left:1291.00px;top:405.00px;width:37.10px;height:37.10px;background:#c96a33"></div><div class="a" style="left:1327.80px;top:405.00px;width:37.10px;height:37.10px;background:#efd9b8"></div><div class="a" style="left:1364.60px;top:405.00px;width:37.10px;height:37.10px;background:#c96a33"></div><div class="a" style="left:1401.40px;top:405.00px;width:37.10px;height:37.10px;background:#efd9b8"></div><div class="a" style="left:1438.20px;top:405.00px;width:37.10px;height:37.10px;background:#c96a33"></div><div class="a" style="left:1475.00px;top:405.00px;width:37.10px;height:37.10px;background:#efd9b8"></div><div class="a" style="left:1511.80px;top:405.00px;width:37.10px;height:37.10px;background:#c96a33"></div><div class="a" style="left:1548.60px;top:405.00px;width:37.10px;height:37.10px;background:#efd9b8"></div><div class="a" style="left:1291.00px;top:441.80px;width:37.10px;height:37.10px;background:#efd9b8"></div><div class="a" style="left:1327.80px;top:441.80px;width:37.10px;height:37.10px;background:#c96a33"></div><div class="a" style="left:1364.60px;top:441.80px;width:37.10px;height:37.10px;background:#efd9b8"></div><div class="a" style="left:1401.40px;top:441.80px;width:37.10px;height:37.10px;background:#c96a33"></div><div class="a" style="left:1438.20px;top:441.80px;width:37.10px;height:37.10px;background:#efd9b8"></div><div class="a" style="left:1475.00px;top:441.80px;width:37.10px;height:37.10px;background:#c96a33"></div><div class="a" style="left:1511.80px;top:441.80px;width:37.10px;height:37.10px;background:#efd9b8"></div><div class="a" style="left:1548.60px;top:441.80px;width:37.10px;height:37.10px;background:#c96a33"></div><div class="a" style="left:1291.00px;top:478.60px;width:37.10px;height:37.10px;background:#c96a33"></div><div class="a" style="left:1327.80px;top:478.60px;width:37.10px;height:37.10px;background:#efd9b8"></div><div class="a" style="left:1364.60px;top:478.60px;width:37.10px;height:37.10px;background:#c96a33"></div><div class="a" style="left:1401.40px;top:478.60px;width:37.10px;height:37.10px;background:#efd9b8"></div><div class="a" style="left:1438.20px;top:478.60px;width:37.10px;height:37.10px;background:#c96a33"></div><div class="a" style="left:1475.00px;top:478.60px;width:37.10px;height:37.10px;background:#efd9b8"></div><div class="a" style="left:1511.80px;top:478.60px;width:37.10px;height:37.10px;background:#c96a33"></div><div class="a" style="left:1548.60px;top:478.60px;width:37.10px;height:37.10px;background:#efd9b8"></div>
<svg class="a" style="left:1291px;top:221px;mix-blend-mode:soft-light;opacity:.28" width="294.7" height="294.7"><rect width="294.7" height="294.7" filter="url(#grain2)"/></svg>
<svg class="pc" style="left:1290.6px;top:220.8px" width="37.6" height="37.6" viewBox="0 0 45 45"><g fill="none" fill-rule="evenodd" stroke="#1a1a1a" stroke-width="1.25" stroke-linecap="round" stroke-linejoin="round" ><g fill="url(#kg)" stroke-linecap="butt"><path d="M 9,39 L 36,39 L 36,36 L 9,36 L 9,39 z"/><path d="M 12.5,32 L 14,29.5 L 31,29.5 L 32.5,32 L 12.5,32 z"/><path d="M 12,36 L 12,32 L 33,32 L 33,36 L 12,36 z"/><path d="M 14,29.5 L 14,16.5 L 31,16.5 L 31,29.5 L 14,29.5 z" stroke-linejoin="miter"/><path d="M 14,16.5 L 11,14 L 34,14 L 31,16.5 L 14,16.5 z"/><path d="M 11,14 L 11,9 L 15,9 L 15,11 L 20,11 L 20,9 L 25,9 L 25,11 L 30,11 L 30,9 L 34,9 L 34,14 L 11,14 z"/></g><g stroke="#f0f0f0" stroke-width="1" stroke-linejoin="miter"><path d="M 12,35.5 L 33,35.5"/><path d="M 13,31.5 L 32,31.5"/><path d="M 14,29.5 L 31,29.5"/><path d="M 14,16.5 L 31,16.5"/><path d="M 11,14 L 34,14"/></g></g></svg>
<svg class="pc" style="left:1365.3px;top:222.2px" width="35.5" height="35.5" viewBox="0 0 45 45"><g fill="none" fill-rule="evenodd" stroke="#1a1a1a" stroke-width="1.25" stroke-linecap="round" stroke-linejoin="round" ><g fill="url(#kg)" stroke-linecap="butt"><path d="M 8.5,35.3 C 12,34.1 19,35.8 22.5,33.2 C 26,35.8 33,34.1 36.5,35.3 C 38,35.8 39.3,36.8 40,38 C 39,39.7 37.5,39.7 36,39.1 C 32.5,37.9 26,39.7 22.5,38 C 19,39.7 12.5,37.9 9,39.1 C 7.5,39.7 6,39.7 5,38 C 5.7,36.8 7,35.8 8.5,35.3 z"/><path d="M 15,32 C 17.5,34.5 27.5,34.5 30,32 C 30.5,30.5 30,30 30,30 C 30,27.5 27.5,26 27.5,26 C 33,24.5 33.5,14.5 22.5,10.5 C 11.5,14.5 12,24.5 17.5,26 C 17.5,26 15,27.5 15,30 C 15,30 14.5,30.5 15,32 z"/><path d="M 25 8 A 2.5 2.5 0 1 1 20,8 A 2.5 2.5 0 1 1 25 8 z"/></g><path d="M 17.5,26 L 27.5,26 M 15,30 L 30,30 M 22.5,15.5 L 22.5,20.5 M 20,18 L 25,18" stroke="#f0f0f0" stroke-linejoin="miter"/></g></svg>
<svg class="pc" style="left:1401.5px;top:221.5px" width="36.5" height="36.5" viewBox="0 0 45 45"><g fill="none" fill-rule="evenodd" stroke="#1a1a1a" stroke-width="1.25" stroke-linecap="round" stroke-linejoin="round" ><g fill="url(#kg)"><path d="M 9,26 C 17.5,24.5 30,24.5 36,26 L 38.5,13.5 L 31,25 L 30.7,10.9 L 25.5,24.5 L 22.5,10 L 19.5,24.5 L 14.3,10.9 L 14,25 L 6.5,13.5 L 9,26 z" stroke-linecap="butt"/><path d="m 9,26 c 0,2 1.5,2 2.5,4 1,1.5 1,1 0.5,3.5 -1.5,1 -1,2.5 -1,2.5 -1.5,1.5 0,2.5 0,2.5 6.5,1 16.5,1 23,0 0,0 1.5,-1 0,-2.5 0,0 0.5,-1.5 -1,-2.5 -0.5,-2.5 -0.5,-2 0.5,-3.5 1,-2 2.5,-2 2.5,-4 -8.5,-1.5 -18.5,-1.5 -27,0 z"/><circle cx="6" cy="12" r="2"/><circle cx="14" cy="9" r="2"/><circle cx="22.5" cy="8" r="2"/><circle cx="31" cy="9" r="2"/><circle cx="39" cy="12" r="2"/></g><g stroke="#f0f0f0" stroke-width="1.1"><path d="M 11.5,30.5 C 15,29.5 30,29.5 33.5,30.5"/><path d="M 12.5,33.5 C 18,32.6 27,32.6 32.5,33.5"/><path d="M 11.5,36.3 C 17,35.4 28,35.4 33.5,36.3"/></g></g></svg>
<svg class="pc" style="left:1438.6px;top:222.2px" width="36.0" height="36.0" viewBox="0 0 45 45"><g fill="none" fill-rule="evenodd" stroke="#1a1a1a" stroke-width="1.25" stroke-linecap="round" stroke-linejoin="round" ><path d="M 22.5,11.63 L 22.5,6" stroke-linejoin="miter"/><path d="M 20,8 L 25,8" stroke-linejoin="miter"/><path d="M 22.5,25 C 22.5,25 27,17.5 25.5,14.5 C 25.5,14.5 24.5,12 22.5,12 C 20.5,12 19.5,14.5 19.5,14.5 C 18,17.5 22.5,25 22.5,25" fill="url(#kg)" stroke-linecap="butt" stroke-linejoin="miter"/><path d="M 12.5,37 C 18,40.5 27,40.5 32.5,37 L 32.5,30 C 32.5,30 41.5,25.5 38.5,19.5 C 34.5,13 25,16 22.5,23.5 L 22.5,27 L 22.5,23.5 C 20,16 10.5,13 6.5,19.5 C 3.5,25.5 12.5,30 12.5,30 L 12.5,37" fill="url(#kg)"/><g stroke="#f0f0f0" stroke-width="1.5"><path d="M 32,29.5 C 32,29.5 40.5,25.5 38.03,19.85 C 34.15,14 25,18 22.5,24.5 L 22.5,26.6 L 22.5,24.5 C 20,18 10.85,14 6.97,19.85 C 4.5,25.5 13,29.5 13,29.5"/><path d="M 12.5,30 C 18,27 27,27 32.5,30 M 12.5,33.5 C 18,30.5 27,30.5 32.5,33.5 M 12.5,37 C 18,34 27,34 32.5,37"/></g></g></svg>
<svg class="pc" style="left:1475.7px;top:222.2px" width="35.5" height="35.5" viewBox="0 0 45 45"><g fill="none" fill-rule="evenodd" stroke="#1a1a1a" stroke-width="1.25" stroke-linecap="round" stroke-linejoin="round" ><g fill="url(#kg)" stroke-linecap="butt"><path d="M 8.5,35.3 C 12,34.1 19,35.8 22.5,33.2 C 26,35.8 33,34.1 36.5,35.3 C 38,35.8 39.3,36.8 40,38 C 39,39.7 37.5,39.7 36,39.1 C 32.5,37.9 26,39.7 22.5,38 C 19,39.7 12.5,37.9 9,39.1 C 7.5,39.7 6,39.7 5,38 C 5.7,36.8 7,35.8 8.5,35.3 z"/><path d="M 15,32 C 17.5,34.5 27.5,34.5 30,32 C 30.5,30.5 30,30 30,30 C 30,27.5 27.5,26 27.5,26 C 33,24.5 33.5,14.5 22.5,10.5 C 11.5,14.5 12,24.5 17.5,26 C 17.5,26 15,27.5 15,30 C 15,30 14.5,30.5 15,32 z"/><path d="M 25 8 A 2.5 2.5 0 1 1 20,8 A 2.5 2.5 0 1 1 25 8 z"/></g><path d="M 17.5,26 L 27.5,26 M 15,30 L 30,30 M 22.5,15.5 L 22.5,20.5 M 20,18 L 25,18" stroke="#f0f0f0" stroke-linejoin="miter"/></g></svg>
<svg class="pc" style="left:1548.2px;top:220.8px" width="37.6" height="37.6" viewBox="0 0 45 45"><g fill="none" fill-rule="evenodd" stroke="#1a1a1a" stroke-width="1.25" stroke-linecap="round" stroke-linejoin="round" ><g fill="url(#kg)" stroke-linecap="butt"><path d="M 9,39 L 36,39 L 36,36 L 9,36 L 9,39 z"/><path d="M 12.5,32 L 14,29.5 L 31,29.5 L 32.5,32 L 12.5,32 z"/><path d="M 12,36 L 12,32 L 33,32 L 33,36 L 12,36 z"/><path d="M 14,29.5 L 14,16.5 L 31,16.5 L 31,29.5 L 14,29.5 z" stroke-linejoin="miter"/><path d="M 14,16.5 L 11,14 L 34,14 L 31,16.5 L 14,16.5 z"/><path d="M 11,14 L 11,9 L 15,9 L 15,11 L 20,11 L 20,9 L 25,9 L 25,11 L 30,11 L 30,9 L 34,9 L 34,14 L 11,14 z"/></g><g stroke="#f0f0f0" stroke-width="1" stroke-linejoin="miter"><path d="M 12,35.5 L 33,35.5"/><path d="M 13,31.5 L 32,31.5"/><path d="M 14,29.5 L 31,29.5"/><path d="M 14,16.5 L 31,16.5"/><path d="M 11,14 L 34,14"/></g></g></svg>
<svg class="pc" style="left:1290.3px;top:256.5px" width="38.1" height="38.1" viewBox="0 0 45 45"><g fill="none" fill-rule="evenodd" stroke="#1a1a1a" stroke-width="1.25" stroke-linecap="round" stroke-linejoin="round" ><path d="m 22.5,9 c -2.21,0 -4,1.79 -4,4 0,0.89 0.29,1.71 0.78,2.38 C 17.33,16.5 16,18.59 16,21 c 0,2.03 0.94,3.84 2.41,5.03 C 15.41,27.09 11,31.58 11,39.5 H 34 C 34,31.58 29.59,27.09 26.59,26.03 28.06,24.84 29,23.03 29,21 29,18.59 27.67,16.5 25.72,15.38 26.21,14.71 26.5,13.89 26.5,13 c 0,-2.21 -1.79,-4 -4,-4 z" fill="url(#kg)"/></g></svg>
<svg class="pc" style="left:1327.1px;top:256.5px" width="38.1" height="38.1" viewBox="0 0 45 45"><g fill="none" fill-rule="evenodd" stroke="#1a1a1a" stroke-width="1.25" stroke-linecap="round" stroke-linejoin="round" ><path d="m 22.5,9 c -2.21,0 -4,1.79 -4,4 0,0.89 0.29,1.71 0.78,2.38 C 17.33,16.5 16,18.59 16,21 c 0,2.03 0.94,3.84 2.41,5.03 C 15.41,27.09 11,31.58 11,39.5 H 34 C 34,31.58 29.59,27.09 26.59,26.03 28.06,24.84 29,23.03 29,21 29,18.59 27.67,16.5 25.72,15.38 26.21,14.71 26.5,13.89 26.5,13 c 0,-2.21 -1.79,-4 -4,-4 z" fill="url(#kg)"/></g></svg>
<svg class="pc" style="left:1401.0px;top:258.1px" width="37.6" height="37.6" viewBox="0 0 45 45"><g fill="none" fill-rule="evenodd" stroke="#1a1a1a" stroke-width="1.25" stroke-linecap="round" stroke-linejoin="round" ><path d="M 22,10 C 32.5,11 38.5,18 38,39 L 15,39 C 15,30 25,32.5 23,18" fill="url(#kg)"/><path d="M 24,18 C 24.38,20.91 18.45,25.37 16,27 C 13,29 13.18,31.34 11,31 C 9.958,30.06 12.41,27.96 11,28 C 10,28 11.19,29.23 10,30 C 9,30 5.997,31 6,26 C 6,24 12,14 12,14 C 12,14 13.89,12.1 14,10.5 C 13.27,9.506 13.5,8.5 13.5,7.5 C 14.5,6.5 16.5,10 16.5,10 L 18.5,10 C 18.5,10 19.28,8.008 21,7 C 22,7 22,10 22,10" fill="url(#kg)"/><path d="M 9.5 25.5 A 0.5 0.5 0 1 1 8.5,25.5 A 0.5 0.5 0 1 1 9.5 25.5 z" fill="#f0f0f0" stroke="#f0f0f0"/><path d="M 15 15.5 A 0.5 1.5 0 1 1 14,15.5 A 0.5 1.5 0 1 1 15 15.5 z" transform="matrix(0.866,0.5,-0.5,0.866,9.693,-5.173)" fill="#f0f0f0" stroke="#f0f0f0"/><path d="M 24.55,10.4 L 24.1,11.85 L 24.6,12 C 27.75,13 30.25,14.49 32.5,18.75 C 34.75,23.01 35.75,29.06 35.25,39 L 35.2,39.5 L 37.45,39.5 L 37.5,39 C 38,28.94 36.62,22.15 34.25,17.66 C 31.88,13.17 28.46,11.02 25.06,10.5 L 24.55,10.4 z" fill="#f0f0f0" stroke="none"/></g></svg>
<svg class="pc" style="left:1437.5px;top:256.5px" width="38.1" height="38.1" viewBox="0 0 45 45"><g fill="none" fill-rule="evenodd" stroke="#1a1a1a" stroke-width="1.25" stroke-linecap="round" stroke-linejoin="round" ><path d="m 22.5,9 c -2.21,0 -4,1.79 -4,4 0,0.89 0.29,1.71 0.78,2.38 C 17.33,16.5 16,18.59 16,21 c 0,2.03 0.94,3.84 2.41,5.03 C 15.41,27.09 11,31.58 11,39.5 H 34 C 34,31.58 29.59,27.09 26.59,26.03 28.06,24.84 29,23.03 29,21 29,18.59 27.67,16.5 25.72,15.38 26.21,14.71 26.5,13.89 26.5,13 c 0,-2.21 -1.79,-4 -4,-4 z" fill="url(#kg)"/></g></svg>
<svg class="pc" style="left:1474.3px;top:256.5px" width="38.1" height="38.1" viewBox="0 0 45 45"><g fill="none" fill-rule="evenodd" stroke="#1a1a1a" stroke-width="1.25" stroke-linecap="round" stroke-linejoin="round" ><path d="m 22.5,9 c -2.21,0 -4,1.79 -4,4 0,0.89 0.29,1.71 0.78,2.38 C 17.33,16.5 16,18.59 16,21 c 0,2.03 0.94,3.84 2.41,5.03 C 15.41,27.09 11,31.58 11,39.5 H 34 C 34,31.58 29.59,27.09 26.59,26.03 28.06,24.84 29,23.03 29,21 29,18.59 27.67,16.5 25.72,15.38 26.21,14.71 26.5,13.89 26.5,13 c 0,-2.21 -1.79,-4 -4,-4 z" fill="url(#kg)"/></g></svg>
<svg class="pc" style="left:1511.1px;top:256.5px" width="38.1" height="38.1" viewBox="0 0 45 45"><g fill="none" fill-rule="evenodd" stroke="#1a1a1a" stroke-width="1.25" stroke-linecap="round" stroke-linejoin="round" ><path d="m 22.5,9 c -2.21,0 -4,1.79 -4,4 0,0.89 0.29,1.71 0.78,2.38 C 17.33,16.5 16,18.59 16,21 c 0,2.03 0.94,3.84 2.41,5.03 C 15.41,27.09 11,31.58 11,39.5 H 34 C 34,31.58 29.59,27.09 26.59,26.03 28.06,24.84 29,23.03 29,21 29,18.59 27.67,16.5 25.72,15.38 26.21,14.71 26.5,13.89 26.5,13 c 0,-2.21 -1.79,-4 -4,-4 z" fill="url(#kg)"/></g></svg>
<svg class="pc" style="left:1547.9px;top:256.5px" width="38.1" height="38.1" viewBox="0 0 45 45"><g fill="none" fill-rule="evenodd" stroke="#1a1a1a" stroke-width="1.25" stroke-linecap="round" stroke-linejoin="round" ><path d="m 22.5,9 c -2.21,0 -4,1.79 -4,4 0,0.89 0.29,1.71 0.78,2.38 C 17.33,16.5 16,18.59 16,21 c 0,2.03 0.94,3.84 2.41,5.03 C 15.41,27.09 11,31.58 11,39.5 H 34 C 34,31.58 29.59,27.09 26.59,26.03 28.06,24.84 29,23.03 29,21 29,18.59 27.67,16.5 25.72,15.38 26.21,14.71 26.5,13.89 26.5,13 c 0,-2.21 -1.79,-4 -4,-4 z" fill="url(#kg)"/></g></svg>
<svg class="pc" style="left:1400.7px;top:293.3px" width="38.1" height="38.1" viewBox="0 0 45 45"><g fill="none" fill-rule="evenodd" stroke="#1a1a1a" stroke-width="1.25" stroke-linecap="round" stroke-linejoin="round" ><path d="m 22.5,9 c -2.21,0 -4,1.79 -4,4 0,0.89 0.29,1.71 0.78,2.38 C 17.33,16.5 16,18.59 16,21 c 0,2.03 0.94,3.84 2.41,5.03 C 15.41,27.09 11,31.58 11,39.5 H 34 C 34,31.58 29.59,27.09 26.59,26.03 28.06,24.84 29,23.03 29,21 29,18.59 27.67,16.5 25.72,15.38 26.21,14.71 26.5,13.89 26.5,13 c 0,-2.21 -1.79,-4 -4,-4 z" fill="url(#kg)"/></g></svg>
<svg class="pc" style="left:1474.6px;top:294.9px" width="37.6" height="37.6" viewBox="0 0 45 45"><g fill="none" fill-rule="evenodd" stroke="#1a1a1a" stroke-width="1.25" stroke-linecap="round" stroke-linejoin="round" ><path d="M 22,10 C 32.5,11 38.5,18 38,39 L 15,39 C 15,30 25,32.5 23,18" fill="url(#kg)"/><path d="M 24,18 C 24.38,20.91 18.45,25.37 16,27 C 13,29 13.18,31.34 11,31 C 9.958,30.06 12.41,27.96 11,28 C 10,28 11.19,29.23 10,30 C 9,30 5.997,31 6,26 C 6,24 12,14 12,14 C 12,14 13.89,12.1 14,10.5 C 13.27,9.506 13.5,8.5 13.5,7.5 C 14.5,6.5 16.5,10 16.5,10 L 18.5,10 C 18.5,10 19.28,8.008 21,7 C 22,7 22,10 22,10" fill="url(#kg)"/><path d="M 9.5 25.5 A 0.5 0.5 0 1 1 8.5,25.5 A 0.5 0.5 0 1 1 9.5 25.5 z" fill="#f0f0f0" stroke="#f0f0f0"/><path d="M 15 15.5 A 0.5 1.5 0 1 1 14,15.5 A 0.5 1.5 0 1 1 15 15.5 z" transform="matrix(0.866,0.5,-0.5,0.866,9.693,-5.173)" fill="#f0f0f0" stroke="#f0f0f0"/><path d="M 24.55,10.4 L 24.1,11.85 L 24.6,12 C 27.75,13 30.25,14.49 32.5,18.75 C 34.75,23.01 35.75,29.06 35.25,39 L 35.2,39.5 L 37.45,39.5 L 37.5,39 C 38,28.94 36.62,22.15 34.25,17.66 C 31.88,13.17 28.46,11.02 25.06,10.5 L 24.55,10.4 z" fill="#f0f0f0" stroke="none"/></g></svg>
<svg class="pc" style="left:1328.5px;top:332.6px" width="35.5" height="35.5" viewBox="0 0 45 45"><g fill="none" fill-rule="evenodd" stroke="#1a1a1a" stroke-width="1.25" stroke-linecap="round" stroke-linejoin="round" ><g fill="url(#wg)" stroke-linecap="butt"><path d="M 8.5,35.3 C 12,34.1 19,35.8 22.5,33.2 C 26,35.8 33,34.1 36.5,35.3 C 38,35.8 39.3,36.8 40,38 C 39,39.7 37.5,39.7 36,39.1 C 32.5,37.9 26,39.7 22.5,38 C 19,39.7 12.5,37.9 9,39.1 C 7.5,39.7 6,39.7 5,38 C 5.7,36.8 7,35.8 8.5,35.3 z"/><path d="M 15,32 C 17.5,34.5 27.5,34.5 30,32 C 30.5,30.5 30,30 30,30 C 30,27.5 27.5,26 27.5,26 C 33,24.5 33.5,14.5 22.5,10.5 C 11.5,14.5 12,24.5 17.5,26 C 17.5,26 15,27.5 15,30 C 15,30 14.5,30.5 15,32 z"/><path d="M 25 8 A 2.5 2.5 0 1 1 20,8 A 2.5 2.5 0 1 1 25 8 z"/></g><path d="M 17.5,26 L 27.5,26 M 15,30 L 30,30 M 22.5,15.5 L 22.5,20.5 M 20,18 L 25,18" stroke="#1a1a1a" stroke-linejoin="miter"/></g></svg>
<svg class="pc" style="left:1401.0px;top:368.5px" width="37.6" height="37.6" viewBox="0 0 45 45"><g fill="none" fill-rule="evenodd" stroke="#1a1a1a" stroke-width="1.25" stroke-linecap="round" stroke-linejoin="round" ><path d="M 22,10 C 32.5,11 38.5,18 38,39 L 15,39 C 15,30 25,32.5 23,18" fill="url(#wg)"/><path d="M 24,18 C 24.38,20.91 18.45,25.37 16,27 C 13,29 13.18,31.34 11,31 C 9.958,30.06 12.41,27.96 11,28 C 10,28 11.19,29.23 10,30 C 9,30 5.997,31 6,26 C 6,24 12,14 12,14 C 12,14 13.89,12.1 14,10.5 C 13.27,9.506 13.5,8.5 13.5,7.5 C 14.5,6.5 16.5,10 16.5,10 L 18.5,10 C 18.5,10 19.28,8.008 21,7 C 22,7 22,10 22,10" fill="url(#wg)"/><path d="M 9.5 25.5 A 0.5 0.5 0 1 1 8.5,25.5 A 0.5 0.5 0 1 1 9.5 25.5 z" fill="#1a1a1a" stroke="#1a1a1a"/><path d="M 15 15.5 A 0.5 1.5 0 1 1 14,15.5 A 0.5 1.5 0 1 1 15 15.5 z" transform="matrix(0.866,0.5,-0.5,0.866,9.693,-5.173)" fill="#1a1a1a" stroke="#1a1a1a"/></g></svg>
<svg class="pc" style="left:1437.5px;top:366.9px" width="38.1" height="38.1" viewBox="0 0 45 45"><g fill="none" fill-rule="evenodd" stroke="#1a1a1a" stroke-width="1.25" stroke-linecap="round" stroke-linejoin="round" ><path d="m 22.5,9 c -2.21,0 -4,1.79 -4,4 0,0.89 0.29,1.71 0.78,2.38 C 17.33,16.5 16,18.59 16,21 c 0,2.03 0.94,3.84 2.41,5.03 C 15.41,27.09 11,31.58 11,39.5 H 34 C 34,31.58 29.59,27.09 26.59,26.03 28.06,24.84 29,23.03 29,21 29,18.59 27.67,16.5 25.72,15.38 26.21,14.71 26.5,13.89 26.5,13 c 0,-2.21 -1.79,-4 -4,-4 z" fill="url(#wg)"/></g></svg>
<svg class="pc" style="left:1290.3px;top:440.5px" width="38.1" height="38.1" viewBox="0 0 45 45"><g fill="none" fill-rule="evenodd" stroke="#1a1a1a" stroke-width="1.25" stroke-linecap="round" stroke-linejoin="round" ><path d="m 22.5,9 c -2.21,0 -4,1.79 -4,4 0,0.89 0.29,1.71 0.78,2.38 C 17.33,16.5 16,18.59 16,21 c 0,2.03 0.94,3.84 2.41,5.03 C 15.41,27.09 11,31.58 11,39.5 H 34 C 34,31.58 29.59,27.09 26.59,26.03 28.06,24.84 29,23.03 29,21 29,18.59 27.67,16.5 25.72,15.38 26.21,14.71 26.5,13.89 26.5,13 c 0,-2.21 -1.79,-4 -4,-4 z" fill="url(#wg)"/></g></svg>
<svg class="pc" style="left:1327.1px;top:440.5px" width="38.1" height="38.1" viewBox="0 0 45 45"><g fill="none" fill-rule="evenodd" stroke="#1a1a1a" stroke-width="1.25" stroke-linecap="round" stroke-linejoin="round" ><path d="m 22.5,9 c -2.21,0 -4,1.79 -4,4 0,0.89 0.29,1.71 0.78,2.38 C 17.33,16.5 16,18.59 16,21 c 0,2.03 0.94,3.84 2.41,5.03 C 15.41,27.09 11,31.58 11,39.5 H 34 C 34,31.58 29.59,27.09 26.59,26.03 28.06,24.84 29,23.03 29,21 29,18.59 27.67,16.5 25.72,15.38 26.21,14.71 26.5,13.89 26.5,13 c 0,-2.21 -1.79,-4 -4,-4 z" fill="url(#wg)"/></g></svg>
<svg class="pc" style="left:1363.9px;top:440.5px" width="38.1" height="38.1" viewBox="0 0 45 45"><g fill="none" fill-rule="evenodd" stroke="#1a1a1a" stroke-width="1.25" stroke-linecap="round" stroke-linejoin="round" ><path d="m 22.5,9 c -2.21,0 -4,1.79 -4,4 0,0.89 0.29,1.71 0.78,2.38 C 17.33,16.5 16,18.59 16,21 c 0,2.03 0.94,3.84 2.41,5.03 C 15.41,27.09 11,31.58 11,39.5 H 34 C 34,31.58 29.59,27.09 26.59,26.03 28.06,24.84 29,23.03 29,21 29,18.59 27.67,16.5 25.72,15.38 26.21,14.71 26.5,13.89 26.5,13 c 0,-2.21 -1.79,-4 -4,-4 z" fill="url(#wg)"/></g></svg>
<svg class="pc" style="left:1474.3px;top:440.5px" width="38.1" height="38.1" viewBox="0 0 45 45"><g fill="none" fill-rule="evenodd" stroke="#1a1a1a" stroke-width="1.25" stroke-linecap="round" stroke-linejoin="round" ><path d="m 22.5,9 c -2.21,0 -4,1.79 -4,4 0,0.89 0.29,1.71 0.78,2.38 C 17.33,16.5 16,18.59 16,21 c 0,2.03 0.94,3.84 2.41,5.03 C 15.41,27.09 11,31.58 11,39.5 H 34 C 34,31.58 29.59,27.09 26.59,26.03 28.06,24.84 29,23.03 29,21 29,18.59 27.67,16.5 25.72,15.38 26.21,14.71 26.5,13.89 26.5,13 c 0,-2.21 -1.79,-4 -4,-4 z" fill="url(#wg)"/></g></svg>
<svg class="pc" style="left:1511.1px;top:440.5px" width="38.1" height="38.1" viewBox="0 0 45 45"><g fill="none" fill-rule="evenodd" stroke="#1a1a1a" stroke-width="1.25" stroke-linecap="round" stroke-linejoin="round" ><path d="m 22.5,9 c -2.21,0 -4,1.79 -4,4 0,0.89 0.29,1.71 0.78,2.38 C 17.33,16.5 16,18.59 16,21 c 0,2.03 0.94,3.84 2.41,5.03 C 15.41,27.09 11,31.58 11,39.5 H 34 C 34,31.58 29.59,27.09 26.59,26.03 28.06,24.84 29,23.03 29,21 29,18.59 27.67,16.5 25.72,15.38 26.21,14.71 26.5,13.89 26.5,13 c 0,-2.21 -1.79,-4 -4,-4 z" fill="url(#wg)"/></g></svg>
<svg class="pc" style="left:1547.9px;top:440.5px" width="38.1" height="38.1" viewBox="0 0 45 45"><g fill="none" fill-rule="evenodd" stroke="#1a1a1a" stroke-width="1.25" stroke-linecap="round" stroke-linejoin="round" ><path d="m 22.5,9 c -2.21,0 -4,1.79 -4,4 0,0.89 0.29,1.71 0.78,2.38 C 17.33,16.5 16,18.59 16,21 c 0,2.03 0.94,3.84 2.41,5.03 C 15.41,27.09 11,31.58 11,39.5 H 34 C 34,31.58 29.59,27.09 26.59,26.03 28.06,24.84 29,23.03 29,21 29,18.59 27.67,16.5 25.72,15.38 26.21,14.71 26.5,13.89 26.5,13 c 0,-2.21 -1.79,-4 -4,-4 z" fill="url(#wg)"/></g></svg>
<svg class="pc" style="left:1290.6px;top:478.4px" width="37.6" height="37.6" viewBox="0 0 45 45"><g fill="none" fill-rule="evenodd" stroke="#1a1a1a" stroke-width="1.25" stroke-linecap="round" stroke-linejoin="round" ><g fill="url(#wg)" stroke-linecap="butt"><path d="M 9,39 L 36,39 L 36,36 L 9,36 L 9,39 z"/><path d="M 12,36 L 12,32 L 33,32 L 33,36 L 12,36 z"/><path d="M 11,14 L 11,9 L 15,9 L 15,11 L 20,11 L 20,9 L 25,9 L 25,11 L 30,11 L 30,9 L 34,9 L 34,14"/><path d="M 34,14 L 31,17 L 14,17 L 11,14"/><path d="M 31,17 L 31,29.5 L 14,29.5 L 14,17" stroke-linejoin="miter"/><path d="M 31,29.5 L 32.5,32 L 12.5,32 L 14,29.5"/></g><path d="M 11,14 L 34,14" stroke-linejoin="miter"/></g></svg>
<svg class="pc" style="left:1327.4px;top:478.9px" width="37.6" height="37.6" viewBox="0 0 45 45"><g fill="none" fill-rule="evenodd" stroke="#1a1a1a" stroke-width="1.25" stroke-linecap="round" stroke-linejoin="round" ><path d="M 22,10 C 32.5,11 38.5,18 38,39 L 15,39 C 15,30 25,32.5 23,18" fill="url(#wg)"/><path d="M 24,18 C 24.38,20.91 18.45,25.37 16,27 C 13,29 13.18,31.34 11,31 C 9.958,30.06 12.41,27.96 11,28 C 10,28 11.19,29.23 10,30 C 9,30 5.997,31 6,26 C 6,24 12,14 12,14 C 12,14 13.89,12.1 14,10.5 C 13.27,9.506 13.5,8.5 13.5,7.5 C 14.5,6.5 16.5,10 16.5,10 L 18.5,10 C 18.5,10 19.28,8.008 21,7 C 22,7 22,10 22,10" fill="url(#wg)"/><path d="M 9.5 25.5 A 0.5 0.5 0 1 1 8.5,25.5 A 0.5 0.5 0 1 1 9.5 25.5 z" fill="#1a1a1a" stroke="#1a1a1a"/><path d="M 15 15.5 A 0.5 1.5 0 1 1 14,15.5 A 0.5 1.5 0 1 1 15 15.5 z" transform="matrix(0.866,0.5,-0.5,0.866,9.693,-5.173)" fill="#1a1a1a" stroke="#1a1a1a"/></g></svg>
<svg class="pc" style="left:1365.3px;top:479.8px" width="35.5" height="35.5" viewBox="0 0 45 45"><g fill="none" fill-rule="evenodd" stroke="#1a1a1a" stroke-width="1.25" stroke-linecap="round" stroke-linejoin="round" ><g fill="url(#wg)" stroke-linecap="butt"><path d="M 8.5,35.3 C 12,34.1 19,35.8 22.5,33.2 C 26,35.8 33,34.1 36.5,35.3 C 38,35.8 39.3,36.8 40,38 C 39,39.7 37.5,39.7 36,39.1 C 32.5,37.9 26,39.7 22.5,38 C 19,39.7 12.5,37.9 9,39.1 C 7.5,39.7 6,39.7 5,38 C 5.7,36.8 7,35.8 8.5,35.3 z"/><path d="M 15,32 C 17.5,34.5 27.5,34.5 30,32 C 30.5,30.5 30,30 30,30 C 30,27.5 27.5,26 27.5,26 C 33,24.5 33.5,14.5 22.5,10.5 C 11.5,14.5 12,24.5 17.5,26 C 17.5,26 15,27.5 15,30 C 15,30 14.5,30.5 15,32 z"/><path d="M 25 8 A 2.5 2.5 0 1 1 20,8 A 2.5 2.5 0 1 1 25 8 z"/></g><path d="M 17.5,26 L 27.5,26 M 15,30 L 30,30 M 22.5,15.5 L 22.5,20.5 M 20,18 L 25,18" stroke="#1a1a1a" stroke-linejoin="miter"/></g></svg>
<svg class="pc" style="left:1401.5px;top:479.1px" width="36.5" height="36.5" viewBox="0 0 45 45"><g fill="none" fill-rule="evenodd" stroke="#1a1a1a" stroke-width="1.25" stroke-linecap="round" stroke-linejoin="round" ><g fill="url(#wg)"><path d="M 9,26 C 17.5,24.5 30,24.5 36,26 L 38.5,13.5 L 31,25 L 30.7,10.9 L 25.5,24.5 L 22.5,10 L 19.5,24.5 L 14.3,10.9 L 14,25 L 6.5,13.5 L 9,26 z"/><path d="M 9,26 C 9,28 10.5,28 11.5,30 C 12.5,31.5 12.5,31 12,33.5 C 10.5,34.5 11,36 11,36 C 9.5,37.5 11,38.5 11,38.5 C 17.5,39.5 27.5,39.5 34,38.5 C 34,38.5 35.5,37.5 34,36 C 34,36 34.5,34.5 33,33.5 C 32.5,31 32.5,31.5 33.5,30 C 34.5,28 36,28 36,26 C 27.5,24.5 17.5,24.5 9,26 z"/><circle cx="6" cy="12" r="2"/><circle cx="14" cy="9" r="2"/><circle cx="22.5" cy="8" r="2"/><circle cx="31" cy="9" r="2"/><circle cx="39" cy="12" r="2"/></g><path d="M 11.5,30 C 15,29 30,29 33.5,30"/><path d="M 12,33.5 C 18,32.5 27,32.5 33,33.5"/><path d="M 11,36 C 17,35 28,35 34,36"/></g></svg>
<svg class="pc" style="left:1438.6px;top:479.8px" width="36.0" height="36.0" viewBox="0 0 45 45"><g fill="none" fill-rule="evenodd" stroke="#1a1a1a" stroke-width="1.25" stroke-linecap="round" stroke-linejoin="round" ><path d="M 22.5,11.63 L 22.5,6" stroke-linejoin="miter"/><path d="M 20,8 L 25,8" stroke-linejoin="miter"/><path d="M 22.5,25 C 22.5,25 27,17.5 25.5,14.5 C 25.5,14.5 24.5,12 22.5,12 C 20.5,12 19.5,14.5 19.5,14.5 C 18,17.5 22.5,25 22.5,25" fill="url(#wg)" stroke-linecap="butt" stroke-linejoin="miter"/><path d="M 12.5,37 C 18,40.5 27,40.5 32.5,37 L 32.5,30 C 32.5,30 41.5,25.5 38.5,19.5 C 34.5,13 25,16 22.5,23.5 L 22.5,27 L 22.5,23.5 C 20,16 10.5,13 6.5,19.5 C 3.5,25.5 12.5,30 12.5,30 L 12.5,37" fill="url(#wg)"/><path d="M 12.5,30 C 18,27 27,27 32.5,30"/><path d="M 12.5,33.5 C 18,30.5 27,30.5 32.5,33.5"/><path d="M 12.5,37 C 18,34 27,34 32.5,37"/></g></svg>
<svg class="pc" style="left:1548.2px;top:478.4px" width="37.6" height="37.6" viewBox="0 0 45 45"><g fill="none" fill-rule="evenodd" stroke="#1a1a1a" stroke-width="1.25" stroke-linecap="round" stroke-linejoin="round" ><g fill="url(#wg)" stroke-linecap="butt"><path d="M 9,39 L 36,39 L 36,36 L 9,36 L 9,39 z"/><path d="M 12,36 L 12,32 L 33,32 L 33,36 L 12,36 z"/><path d="M 11,14 L 11,9 L 15,9 L 15,11 L 20,11 L 20,9 L 25,9 L 25,11 L 30,11 L 30,9 L 34,9 L 34,14"/><path d="M 34,14 L 31,17 L 14,17 L 11,14"/><path d="M 31,17 L 31,29.5 L 14,29.5 L 14,17" stroke-linejoin="miter"/><path d="M 31,29.5 L 32.5,32 L 12.5,32 L 14,29.5"/></g><path d="M 11,14 L 34,14" stroke-linejoin="miter"/></g></svg>
<div class="a" style="left:614.3px;top:774.6px;width:772px;height:83.2px;background:#fff0df;border:2.7px solid #050505"></div>
<div class="btn" style="left:625px;top:815px;width:109px;height:25px;line-height:23px"><span style="transform:scaleX(.9)">Nächster Tipp</span></div>
<div class="cb" style="left:743.0px;top:811.0px;border-color:#b2b2b2"><svg width="8" height="8" style="position:absolute;left:0;top:0" viewBox="0 0 9 9"><path d="M1.8 4.6L3.8 6.6L7.4 2.4" fill="none" stroke="#555" stroke-width="1.1"/></svg></div>
<div class="t" style="left:755px;top:810px">Automatische Tipps</div>
<div class="cb" style="left:743.0px;top:833.0px;border-color:#b2b2b2"><svg width="8" height="8" style="position:absolute;left:0;top:0" viewBox="0 0 9 9"><path d="M1.8 4.6L3.8 6.6L7.4 2.4" fill="none" stroke="#555" stroke-width="1.1"/></svg></div>
<div class="t" style="left:755px;top:832px">Sprechen (KI)</div>
<div class="cb" style="left:851.5px;top:811.0px;border-color:#b2b2b2"><svg width="8" height="8" style="position:absolute;left:0;top:0" viewBox="0 0 9 9"><path d="M1.8 4.6L3.8 6.6L7.4 2.4" fill="none" stroke="#555" stroke-width="1.1"/></svg></div>
<div class="t" style="left:864px;top:810px">Klick und Check</div>
<div class="cb" style="left:851.5px;top:833.0px;border-color:#b2b2b2"></div>
<div class="t" style="left:864px;top:832px">Autoplay</div>
<div class="a" style="left:1406.4px;top:643.9px;width:184px;height:214px;background:#fff0df;border:3px solid #050505"></div>
<div class="a" style="left:0;top:0;width:1600px;height:52px;background:#f1f1f1"></div>
<div class="t" style="left:649px;top:8px;color:#a6a6a6;transform:scaleX(.907)">Vereinsspieler,Allrounder - Stefan-nb, Fritz 20 Einfache Partie 2025</div>
<div class="a" style="left:0;top:29.5px;width:52.5px;height:20.5px;background:#2b579a"></div>
<div class="t" style="left:14px;top:34px;color:#fff;font-weight:bold">Datei</div>
<div class="t" style="left:69px;top:34px;color:#1e1e1e">Start</div>
<div class="t" style="left:112px;top:34px;color:#666">Brett</div>
<div class="t" style="left:157px;top:34px;color:#666">Eröffnungen</div>
<div class="t" style="left:236px;top:34px;color:#666">Ansicht</div>
<div class="t" style="left:291px;top:34px;color:#666">Hilfe</div>
<div class="a" style="left:69px;top:47.5px;width:21px;height:2px;background:#2b579a"></div>
<div class="t" style="left:1553px;top:34px;color:#555">Stil</div>
<div class="a" style="left:2px;top:52.5px;width:1595px;height:76px;background:#fff;border-radius:5px;box-shadow:0 1px 3px rgba(0,0,0,.25)"></div>
<div class="sep" style="left:152px"></div>
<div class="sep" style="left:352px"></div>
<div class="sep" style="left:528px"></div>
<div class="sep" style="left:817px"></div>
<div class="sep" style="left:1032px"></div>
<div class="sep" style="left:1104px"></div>
<div class="sep" style="left:1175px"></div>
<div class="sep" style="left:1395px"></div>
<div class="c g" style="left:28px;top:87.4px">Partie<br><u>e</u>infügen</div>
<div class="t g" style="left:68px;top:59.5px"><u>S</u>tellung einfügen</div>
<div class="t" style="left:68px;top:77.5px">Partie <u>k</u>opieren</div>
<div class="t" style="left:68px;top:95.5px">Stellung kopieren</div>
<div class="c" style="left:77px;top:113.6px;color:#333">Zwischenablage</div>
<div class="c" style="left:176px;top:87.4px">Neu mit<br>Weiss</div>
<div class="c" style="left:215px;top:87.4px">Neu mit<br>Schwarz</div>
<div class="c g" style="left:268px;top:87.4px">Zug<br>zurücknehmen</div>
<div class="c" style="left:325px;top:87.4px"><u>S</u>tellung<br>aufbauen</div>
<div class="c" style="left:252px;top:113.6px;color:#333">Partie</div>
<div class="c" style="left:375px;top:87.4px"><u>Z</u>iehe<br>jetzt!</div>
<div class="c g" style="left:410px;top:87.4px"><u>W</u>ink</div>
<div class="c" style="left:454px;top:87.4px"><u>A</u>ufgeben</div>
<div class="c g" style="left:502px;top:87.4px">Remis<br>anbieten</div>
<div class="c" style="left:440px;top:113.6px;color:#333">Partie</div>
<div class="c" style="left:568px;top:87.4px"><u>D</u>aueranalyse</div>
<div class="c" style="left:632px;top:87.4px"><u>V</u>ollanalyse</div>
<div class="c" style="left:687px;top:87.4px">Gegner<br>auswählen</div>
<div class="cb" style="left:716.5px;top:59.5px;border-color:#b2b2b2"></div>
<div class="t" style="left:730px;top:58.5px">Engine abschalten</div>
<div class="cb" style="left:716.5px;top:75.0px;border-color:#b2b2b2"></div>
<div class="t" style="left:730px;top:74px">Dynamische Tipps</div>
<div class="c" style="left:673px;top:113.6px;color:#333">Stufen</div>
<div class="c" style="left:841px;top:87.4px">Training<br>mit Uhr</div>
<div class="c" style="left:896px;top:87.4px">Unterstütztes<br>Rechentraining</div>
<div class="t" style="left:949px;top:59px">Blind spielen</div>
<div class="cb" style="left:934.0px;top:77.5px;border-color:#b2b2b2"><svg width="8" height="8" style="position:absolute;left:0;top:0" viewBox="0 0 9 9"><path d="M1.8 4.6L3.8 6.6L7.4 2.4" fill="none" stroke="#555" stroke-width="1.1"/></svg></div>
<div class="t" style="left:948px;top:76.5px">Assisted Analysis</div>
<div class="cb" style="left:934.0px;top:93.5px;border-color:#b2b2b2"></div>
<div class="t" style="left:948px;top:92.5px">Dynamische Tipps</div>
<div class="c" style="left:925px;top:113.6px;color:#333">Training</div>
<div class="c" style="left:1069px;top:87.4px">Trophäenliste</div>
<div class="c" style="left:1068px;top:113.6px;color:#333">Trophäen</div>
<div class="c" style="left:1139px;top:87.4px">Karten<br>zeigen</div>
<div class="c" style="left:1139px;top:113.6px;color:#333">Sammelkarten</div>
<div class="c" style="left:1204px;top:87.4px">Abmelden</div>
<div class="c" style="left:1253px;top:87.4px">Konto<br>bearbeiten</div>
<div class="t" style="left:1281px;top:59px">Angemeldet</div>
<div class="t" style="left:1281px;top:76.5px">Elogant</div>
<div class="c" style="left:1286px;top:113.6px;color:#333">ChessBase Account</div>
<svg class="a" style="left:17px;top:59px" width="21" height="26" viewBox="0 0 21 26" fill="none" stroke-linecap="round" stroke-linejoin="round"><g stroke="#b4c0d4" stroke-width="1.3"><path d="M6.5 3.5H2.5Q1 3.5 1 5V23.5Q1 25 2.5 25H18.5Q20 25 20 23.5V5Q20 3.5 18.5 3.5H14.5"/><path d="M7 5.5V3L10.5 .8L14 3V5.5Z"/><path d="M4.5 8H16.5V18L13 22H4.5Z"/><path d="M7 11H14M7 13.5H14M7 16H14M7 18.5H11" stroke-width="1"/></g></svg>
<svg class="a" style="left:53px;top:59px" width="11" height="13" viewBox="0 0 11 13" fill="none" stroke-linecap="round" stroke-linejoin="round"><g stroke="#b4c0d4" stroke-width="1"><rect x=".8" y="2.5" width="9" height="9.5" rx="1"/><path d="M.8 5.2H9.8M3.8 5.2V12M6.8 5.2V12M.8 8.6H9.8M3 1V3.5M7.5 1V3.5"/></g></svg>
<svg class="a" style="left:53px;top:77px" width="12" height="14" viewBox="0 0 12 14" fill="none" stroke-linecap="round" stroke-linejoin="round"><rect x="3.5" y=".5" width="7.5" height="10" rx="1" fill="#3563a3" stroke="none"/><rect x=".5" y="2.5" width="7.8" height="10.5" rx="1" fill="#234a85" stroke="#fff" stroke-width=".5"/></svg>
<svg class="a" style="left:53px;top:95px" width="12" height="14" viewBox="0 0 12 14" fill="none" stroke-linecap="round" stroke-linejoin="round"><rect x="3.5" y=".5" width="7.5" height="10" rx="1" fill="#3563a3" stroke="none"/><rect x=".5" y="2.5" width="7.8" height="10.5" rx="1" fill="#234a85" stroke="#fff" stroke-width=".5"/><rect x="2" y="6" width="5" height="5" fill="#dfe8f5" stroke="none"/><path d="M2 8.5H7M4.5 6V11" stroke="#3563a3" stroke-width=".6"/></svg>
<svg class="a" style="left:163px;top:61.4px" width="27" height="21" viewBox="0 0 27 21" fill="none" stroke-linecap="round" stroke-linejoin="round"><polygon points="0,7.5 15,0 27,6.2 11.4,14.4" fill="#2e5a96" stroke="none"/><polygon points="0,7.5 11.4,14.4 11.4,20.6 0,13.2" fill="#23497f" stroke="none"/><polygon points="11.4,14.4 27,6.2 27,11.8 11.4,20.6" fill="#1f3f72" stroke="none"/><polygon points="3.8,9.8 8.8,7.3 12.6,9.6 7.6,12.1" fill="#fff" stroke="none"/><polygon points="5.0,5.0 10.0,2.5 13.8,4.8 8.8,7.3" fill="#fff" stroke="none"/><polygon points="12.6,9.6 17.6,7.1 21.4,9.4 16.4,11.9" fill="#fff" stroke="none"/><polygon points="13.8,4.8 18.8,2.3 22.6,4.6 17.6,7.1" fill="#fff" stroke="none"/><polygon points="0.0,8.1 3.8,10.4 3.8,15.2 0.0,12.9" fill="#e6edf7" stroke="none"/><polygon points="7.6,12.7 11.4,15.0 11.4,19.8 7.6,17.5" fill="#e6edf7" stroke="none"/><polygon points="16.4,12.5 21.4,10.0 21.4,14.6 16.4,17.1" fill="#d5e0f0" stroke="none"/><polygon points="7.6,12.1 11.4,14.4 15.2,12.4 11.4,10" fill="#fff" stroke="#2e5a96" stroke-width=".5"/><polygon points="7.6,12.1 11.4,14.4 11.4,20.2 7.6,17.8" fill="#fff" stroke="#2e5a96" stroke-width=".6"/><polygon points="11.4,14.4 15.2,12.4 15.2,18.2 11.4,20.2" fill="#eef3fa" stroke="#2e5a96" stroke-width=".6"/></svg>
<svg class="a" style="left:201.5px;top:61.4px" width="27" height="21" viewBox="0 0 27 21" fill="none" stroke-linecap="round" stroke-linejoin="round"><polygon points="0,7.5 15,0 27,6.2 11.4,14.4" fill="#2e5a96" stroke="none"/><polygon points="0,7.5 11.4,14.4 11.4,20.6 0,13.2" fill="#23497f" stroke="none"/><polygon points="11.4,14.4 27,6.2 27,11.8 11.4,20.6" fill="#1f3f72" stroke="none"/><polygon points="3.8,9.8 8.8,7.3 12.6,9.6 7.6,12.1" fill="#fff" stroke="none"/><polygon points="5.0,5.0 10.0,2.5 13.8,4.8 8.8,7.3" fill="#fff" stroke="none"/><polygon points="12.6,9.6 17.6,7.1 21.4,9.4 16.4,11.9" fill="#fff" stroke="none"/><polygon points="13.8,4.8 18.8,2.3 22.6,4.6 17.6,7.1" fill="#fff" stroke="none"/><polygon points="0.0,8.1 3.8,10.4 3.8,15.2 0.0,12.9" fill="#e6edf7" stroke="none"/><polygon points="7.6,12.7 11.4,15.0 11.4,19.8 7.6,17.5" fill="#e6edf7" stroke="none"/><polygon points="16.4,12.5 21.4,10.0 21.4,14.6 16.4,17.1" fill="#d5e0f0" stroke="none"/><ellipse cx="11.8" cy="14.6" rx="4" ry="3.6" fill="#1f4580" stroke="none"/></svg>
<svg class="a" style="left:254px;top:59px" width="28" height="25" viewBox="0 0 28 25" fill="none" stroke-linecap="round" stroke-linejoin="round"><defs><linearGradient id="tg" x1="0" y1="0" x2="0" y2="1"><stop offset="0" stop-color="#aebdd3"/><stop offset="1" stop-color="#8fa4c2"/></linearGradient></defs><path d="M3.5 12.5L24.5 2.3V22.7Z" fill="url(#tg)" stroke="url(#tg)" stroke-width="4.6" stroke-linejoin="round"/></svg>
<svg class="a" style="left:310.5px;top:58px" width="28" height="26" viewBox="0 0 28 26" fill="none" stroke-linecap="round" stroke-linejoin="round"><g stroke="#2e5a96" stroke-width="1.5"><rect x="9" y="1" width="17" height="17"/><path d="M14.7 1V18M20.3 1V18M9 6.7H26M9 12.3H26"/></g><path d="M3 24.5H14V22.5H12.5C12.5 20 13 18.5 11 16.5C13.5 16.5 15 15.5 14.5 13C14 10 12.5 7.5 8 7C4 8.5 1.8 12.5 2 17C2.2 20 4 21 4 22.5H3Z" fill="#fff" stroke="#2e5a96" stroke-width="1.5"/><path d="M1.5 25H15.5" stroke="#2e5a96" stroke-width="1.6"/><path d="M4.8 12V17M4.8 14.5H6.3" stroke="#2e5a96" stroke-width=".9"/></svg>
<svg class="a" style="left:367px;top:59px" width="16" height="26" viewBox="0 0 16 26" fill="none" stroke-linecap="round" stroke-linejoin="round"><path d="M5 1H13L9.5 9.5H15L2.5 25L6 14H1.2Z" stroke="#24416f" stroke-width="1.5" fill="#fff"/></svg>
<svg class="a" style="left:397px;top:58px" width="26" height="27" viewBox="0 0 26 27" fill="none" stroke-linecap="round" stroke-linejoin="round"><g stroke="#b4c0d4" stroke-width="1.2"><circle cx="13" cy="6" r="4.6"/><path d="M11 10.5V13H15V10.5M11.5 6L13 7.5L14.5 6M13 7.5V10"/><path d="M4.5 2L6.5 2.8M4 6H6.2M4.5 10L6.5 9.2M21.5 2L19.5 2.8M22 6H19.8M21.5 10L19.5 9.2"/><path d="M1 26V21Q1 19 3 18.3L10 15.5L13 19L16 15.5L23 18.3Q25 19 25 21V26Z"/><path d="M13 19V26M10 15.5L9 18L12 20.5M16 15.5L17 18L14 20.5"/></g></svg>
<svg class="a" style="left:441px;top:57.5px" width="27" height="28" viewBox="0 0 27 28" fill="none" stroke-linecap="round" stroke-linejoin="round"><g stroke="#1f3556" stroke-width="1.3"><path d="M.3 3.6L12.6 1.7V11.4L.8 12.2L2 7.8Z" fill="#2e6ab5" stroke="#2e6ab5" stroke-width=".6"/><rect x="12.6" y="1.5" width="2" height="12.5" fill="#dfe8f6" stroke="#2e5a96" stroke-width=".8"/><path d="M15 10.6C17 9.4 19 9.6 20.5 10.5C22.5 11.6 24.5 11.2 26.3 10V20.7L17 26.7C14.5 24.5 10 20.5 8 18C8.3 16.8 9.3 16.2 10.5 15.8L13.5 14.8" fill="#fff"/><path d="M9 18.5L12 17.6M11 21.2L14.2 20.1M13.2 24L16.7 22.8" stroke-width="1.2"/></g></svg>
<svg class="a" style="left:489.5px;top:57.5px" width="27" height="28" viewBox="0 0 27 28" fill="none" stroke-linecap="round" stroke-linejoin="round"><g stroke="#b4c0d4" stroke-width="1.3"><circle cx="6" cy="7.4" r="5.4" fill="#fff"/><path d="M3.6 6.3H8.4M3.6 8.4H8.4" stroke-width="1"/><path d="M9.8 11.6L13 14.6" stroke-width="2.2"/><path d="M15 10.6C17 9.4 19 9.6 20.5 10.5C22.5 11.6 24.5 11.2 26.3 10V20.7L17 26.7C14.5 24.5 10 20.5 8 18C8.3 16.8 9.3 16.2 10.5 15.8L13.5 14.8" fill="#fff"/><path d="M9 18.5L12 17.6M11 21.2L14.2 20.1M13.2 24L16.7 22.8" stroke-width="1.2"/></g></svg>
<svg class="a" style="left:554.5px;top:58.5px" width="27" height="27" viewBox="0 0 27 27" fill="none" stroke-linecap="round" stroke-linejoin="round"><g stroke="#2e5a96" stroke-width="1.5"><circle cx="17.5" cy="8.5" r="7.5"/><circle cx="17.5" cy="8.5" r="4.3"/><circle cx="8.5" cy="18" r="7.5"/><circle cx="8.5" cy="18" r="4.3"/><path d="M10 8.5Q12 14 16.5 17.5Q18 26 24 25.5"/><path d="M3.5 4H8M1 1H2M4.5 1H9M5.5 7H8.5M19 19.5H24M19 22.5H24M25.5 25.5H26" stroke-width="1.2"/></g></svg>
<svg class="a" style="left:619px;top:58.5px" width="27" height="27" viewBox="0 0 27 27" fill="none" stroke-linecap="round" stroke-linejoin="round"><g stroke="#2e5a96" stroke-width="1.5"><path d="M.8 25.5H25.5"/><path d="M2.5 25V18H6V25M9 25V12.5H12.5V25M15.5 25V15H19V25M22 25V8H25V25"/><path d="M4.2 10.5L9.6 5.8L15.5 8.5L22 3"/><circle cx="3.3" cy="11.5" r="1.6" fill="#fff"/><circle cx="10.5" cy="5" r="1.6" fill="#fff"/><circle cx="16.5" cy="8.8" r="1.6" fill="#fff"/><circle cx="23" cy="2.3" r="1.6" fill="#fff"/></g></svg>
<svg class="a" style="left:673.7px;top:59.5px" width="27" height="25" viewBox="0 0 27 25" fill="none" stroke-linecap="round" stroke-linejoin="round"><g stroke="#2e5a96" stroke-width="1.5"><path d="M2.6 1C-.6 6 1.4 10.6 8.2 11.2L8.6 8.6C5.4 8.4 3.4 5.6 3.9 1.3ZM24.4 1C27.6 6 25.6 10.6 18.8 11.2L18.4 8.6C21.6 8.4 23.6 5.6 23.1 1.3Z" stroke-width="1.2"/><path d="M8 9.5Q13.5 6.5 19 9.5L18.5 17Q18 19 17 19.5M10 19.5Q9 19 8.5 17Z"/><path d="M8 11.5Q4 10.5 2 12Q4 15 8.5 14.5M19 11.5Q23 10.5 25 12Q23 15 18.5 14.5"/><rect x="8.7" y="17.5" width="9.6" height="6.5" rx="3.2"/><path d="M11.5 20.8H12M15 20.8H15.5M10.5 13H11.5M15.5 13H16.5" stroke-width="1.3"/></g></svg>
<svg class="a" style="left:828px;top:59.5px" width="27" height="24" viewBox="0 0 27 24" fill="none" stroke-linecap="round" stroke-linejoin="round"><g stroke="#2e5a96" stroke-width="1.5"><rect x="1" y="4.5" width="25" height="18" rx="2"/><path d="M1 16H26M1 19H26"/><circle cx="8" cy="10.5" r="3.8"/><circle cx="19" cy="10.5" r="3.8"/><path d="M8 8.5V10.5H9.5M19 10.5L17.8 9" stroke-width="1"/><path d="M5.5 1H11M8.2 1V4.5M16.5 1H22M19.2 1V4.5"/></g></svg>
<svg class="a" style="left:882px;top:58px" width="28" height="27" viewBox="0 0 28 27" fill="none" stroke-linecap="round" stroke-linejoin="round"><g stroke="#24416f" stroke-width="1.4"><path d="M13 1.5C20 0 25 5 24.5 11L27 16H24.5V20.5Q24.5 22 22.5 22H20.5V26"/><rect x="3" y="3" width="9" height="9" rx="1" stroke="#2e5a96"/><rect x="5.8" y="5.8" width="3.4" height="3.4" stroke="#2e5a96" stroke-width="1.1"/><path d="M1 5H3M1 7.5H3M1 10H3M12 5H14M12 7.5H14M12 10H14M5 1V3M7.5 1V3M10 1V3" stroke="#2e5a96" stroke-width="1"/><path d="M7.5 12V16Q10 20 10 26"/></g></svg>
<svg class="a" style="left:933px;top:59.5px" width="14" height="11" viewBox="0 0 14 11" fill="none" stroke-linecap="round" stroke-linejoin="round"><circle cx="3.6" cy="7" r="3.3" fill="#1f4477"/><circle cx="10.6" cy="7" r="3.3" fill="#16325c"/><path d="M1.2 5L3 .8M13 5L11.2 .8M6.5 6Q7.1 5.2 7.7 6" stroke="#1f4477" stroke-width="1"/></svg>
<svg class="a" style="left:1058.8px;top:58.5px" width="20" height="27" viewBox="0 0 20 27" fill="none" stroke-linecap="round" stroke-linejoin="round"><g stroke="#2e5a96" stroke-width="1.5"><rect x=".8" y=".8" width="18.4" height="24.8" rx="2.2"/><path d="M7 4H13V7.5Q13 10.5 10 10.5Q7 10.5 7 7.5Z"/><path d="M7 5H4.8Q4.5 8 7.3 8.3M13 5H15.2Q15.5 8 12.7 8.3M10 10.5V13M7.5 13.3H12.5" stroke-width="1.1"/><path d="M4 16.5H5M7.5 16.5H16M4 19.5H5M7.5 19.5H16M4 22.5H5M7.5 22.5H16" stroke-width="1.6"/></g></svg>
<svg class="a" style="left:1125.5px;top:58.5px" width="27" height="26" viewBox="0 0 27 26" fill="none" stroke-linecap="round" stroke-linejoin="round"><g stroke="#2e5a96" stroke-width="1.5" fill="#fff"><path d="M17 3.5L25.2 6.2L19.5 25L14 23.5"/><path d="M12 1.8L20.5 3.5L16.5 24L10 23"/><rect x=".8" y=".8" width="13.5" height="20.5" rx="1.5"/></g><path d="M4 5H5.3V6.2H6.8V5H8.3V6.2H9.8V5H11V8H10V14H11.3V17H3.7V14H5V8H4Z" fill="#24416f" stroke="none"/><path d="M5.2 9.5H9.8M5.2 12.5H9.8" stroke="#fff" stroke-width=".6"/></svg>
<svg class="a" style="left:1190.5px;top:58.5px" width="27" height="26" viewBox="0 0 27 26" fill="none" stroke-linecap="round" stroke-linejoin="round"><g stroke="#2e5a96" stroke-width="1.5"><path d="M1 3.5L9.5 .8V25.5L1 22.8Z" fill="#fff"/><path d="M9.5 4H17.5V9M17.5 17V22H9.5"/><path d="M13.5 10.5H20V7.3L25.8 13L20 18.7V15.5H13.5Z" fill="#fff"/><path d="M6.5 13H7" stroke-width="1.2"/></g></svg>
<svg class="a" style="left:1239.5px;top:58.5px" width="28" height="27" viewBox="0 0 28 27" fill="none" stroke-linecap="round" stroke-linejoin="round"><g stroke="#2e5a96" stroke-width="1.6"><circle cx="10" cy="4.8" r="3.8"/><path d="M17 15.5C14 12.5 6 12.5 3 16C1.5 18 .8 20 1 22.5H11.5"/><path d="M22.5 11.5L26.2 14.8L15.5 25.5L11.3 26L12 21.8Z" fill="#fff"/></g></svg>
<div class="a" style="left:1339px;top:57px;width:48px;height:46px;border-left:1px solid #e4e4e4;border-top:1px solid #e4e4e4"></div>
<svg class="a" style="left:1347px;top:58px" width="34" height="43" viewBox="0 0 34 43" fill="none" stroke-linecap="round" stroke-linejoin="round"><defs><linearGradient id="av1" x1="0" y1="0" x2="1" y2="1"><stop offset="0" stop-color="#7a7a7a"/><stop offset="1" stop-color="#1e1e1e"/></linearGradient><linearGradient id="av2" x1="0" y1="0" x2="0" y2="1"><stop offset="0" stop-color="#6a6a6a"/><stop offset="1" stop-color="#262626"/></linearGradient></defs><ellipse cx="17" cy="39" rx="16" ry="3" fill="#ddd" stroke="none"/><path d="M1.5 38C0 30 4 25 11 23.5L16.5 27L22 23.5C29 25 33.5 30 32 38Q17 44 1.5 38Z" fill="url(#av2)" stroke="none"/><path d="M11.5 19H21.5V29H11.5Z" fill="#3c3c3c" stroke="none"/><path d="M8.5 11C7.5 4 11 .5 16.5 .5C22.5 .5 25.5 4 24.5 11C24.3 16 21.5 22.5 16.5 24C11.5 22.5 8.8 16 8.5 11Z" fill="url(#av1)" stroke="none"/><path d="M8 10.5C6.5 3 11 0 16.5 0C23 0 26.5 3.5 24.8 12C24 9 22.5 7 21 6C17 7.5 12 7 9.5 5.5C8.5 7 8.3 9 8 10.5Z" fill="#1c1c1c" stroke="none"/></svg>
<svg class="a" style="left:7px;top:5px" width="14" height="14" viewBox="0 0 14 14" fill="none" stroke-linecap="round" stroke-linejoin="round"><path d="M.7 .7H10.5L13.3 3.5V13.3H.7Z" fill="#dfe5ee" stroke="#6b7b96" stroke-width="1.2"/><path d="M3.5 .7V5H9.5V.7M3 13.3V8.5H11V13.3" stroke="#6b7b96" stroke-width="1.2"/><path d="M4.5 10.5H9.5" stroke="#6b7b96" stroke-width="1"/></svg>
<svg class="a" style="left:27px;top:6px" width="15" height="12" viewBox="0 0 15 12" fill="none" stroke-linecap="round" stroke-linejoin="round"><path d="M5.5 .8L1.3 4.3L5.5 7.8M1.5 4.3H10Q13.8 4.3 13.8 7.5Q13.8 10.7 10 10.7H6" stroke="#2b3b68" stroke-width="1.7"/></svg>
<svg class="a" style="left:47px;top:6px" width="15" height="12" viewBox="0 0 15 12" fill="none" stroke-linecap="round" stroke-linejoin="round"><path d="M9.5 2.2L13.7 5.7L9.5 9.2M13.5 5.7H5Q1.2 5.7 1.2 3.3Q1.2 1 4 1H8" stroke="#a9b1c1" stroke-width="1.7"/></svg>
<div class="a" style="left:65.5px;top:3px;width:17.5px;height:17.5px;background:#f7f8fa;border:1px solid #e3e6ec;border-radius:2px"></div>
<svg class="a" style="left:67.5px;top:5px" width="14" height="14" viewBox="0 0 14 14" fill="none" stroke-linecap="round" stroke-linejoin="round"><rect x=".7" y=".7" width="12.1" height="12.6" stroke="#5a6a88" stroke-width="1.3"/><path d="M4.8 .7V13.3M8.8 .7V13.3M.7 4.8H12.8M.7 8.8H12.8" stroke="#5a6a88" stroke-width="1.2"/><rect x="5.5" y="5.5" width="7" height="7.5" fill="#8d98ad" stroke="none"/><rect x="1.4" y="1.4" width="2.8" height="2.8" fill="#fff" stroke="none"/><rect x="5.5" y="1.4" width="2.8" height="2.8" fill="#fff" stroke="none"/><rect x="9.5" y="1.4" width="2.8" height="2.8" fill="#fff" stroke="none"/><rect x="1.4" y="5.5" width="2.8" height="2.8" fill="#fff" stroke="none"/><rect x="1.4" y="9.5" width="2.8" height="2.8" fill="#fff" stroke="none"/></svg>
<svg class="a" style="left:88.5px;top:9px" width="5" height="6" viewBox="0 0 5 6" fill="none" stroke-linecap="round" stroke-linejoin="round"><path d="M.3 .6H4.7" stroke="#777" stroke-width=".9"/><path d="M.3 2.3H4.7L2.5 5Z" fill="#666" stroke="none"/></svg>
<svg class="a" style="left:1496px;top:8px" width="92" height="12" viewBox="0 0 92 12" fill="none" stroke-linecap="round" stroke-linejoin="round"><path d="M1 5.5H10" stroke="#c4c4c4" stroke-width="1"/><path d="M41.5 3.5H48.5V10.5H41.5ZM43.5 3.5V1.5H50.5V8.5H48.5" stroke="#c4c4c4" stroke-width="1"/><path d="M80 2L88 10M88 2L80 10" stroke="#c4c4c4" stroke-width="1"/></svg>
<svg class="a" style="left:1573px;top:36px" width="8" height="5" viewBox="0 0 8 5" fill="none" stroke-linecap="round" stroke-linejoin="round"><path d="M1 1L4 4L7 1" stroke="#9a9a9a" stroke-width="1.2"/></svg>
<div class="a" style="left:1584px;top:33.5px;width:12px;height:12px;border-radius:50%;border:1.3px solid #2c4f82;background:#e3eefb;color:#2c4f82;font-size:9.5px;font-weight:bold;line-height:9.5px;text-align:center">?</div>
<div class="a" id="dlg" style="left:572.3px;top:134.7px;width:585.2px;height:632.6px;background:#f9f9f9;border:1.3px solid #3567b8;box-shadow:0 1px 4px rgba(0,0,0,.25)"></div>
<div class="a" style="left:573.5px;top:136px;width:583px;height:25.5px;background:#f0f0f0"></div>
<div class="t" style="left:583px;top:145px;color:#555">Wähle Deinen Gegner</div>
<div class="a" style="left:590px;top:179px;width:552.5px;height:428.5px;border:1px solid #dcdcdc;border-radius:3px"></div>
<div class="t" style="left:596px;top:173px;background:#f9f9f9;padding:0 2px">Persönlichkeit</div>
<div class="a" id="img" style="left:604.5px;top:194.5px;width:525.5px;height:366px;background:#52003a"></div>
<div class="a" style="left:604.5px;top:566px;width:525.5px;height:33.5px;background:#fff;border:1px solid #a8a8a8;border-top-color:#777"></div>
<div class="c" style="left:867px;top:574px;transform:translateX(-50%);font-family:'Liberation Serif',serif;font-style:italic;font-size:16px;letter-spacing:.35px;line-height:18px;color:#111">Klicke auf ein Bild</div>
<div class="a" style="left:590px;top:648.5px;width:552.5px;height:60px;border:1px solid #dcdcdc;border-radius:3px"></div>
<div class="t" style="left:596px;top:642px;background:#f9f9f9;padding:0 2px">Spielstufe</div>
<div class="rd" style="left:604.8px;top:667.2px"></div>
<div class="t" style="left:617.6px;top:666.0px">Einsteiger</div>
<div class="rd" style="left:604.8px;top:685.5px"></div>
<div class="t" style="left:617.6px;top:684.3px">Starker Vereinsspieler</div>
<div class="rd" style="left:781.9px;top:667.2px"></div>
<div class="t" style="left:794.7px;top:666.0px">Freizeitspieler</div>
<div class="rd" style="left:781.9px;top:685.5px"></div>
<div class="t" style="left:794.7px;top:684.3px">Meisterkandidat</div>
<div class="rd" style="left:959.2px;top:667.2px"><div class="a" style="left:1.8px;top:1.8px;width:4px;height:4px;border-radius:50%;background:#222"></div></div>
<div class="t" style="left:972.0px;top:666.0px">Vereinsspieler</div>
<div class="rd" style="left:959.2px;top:685.5px"></div>
<div class="t" style="left:972.0px;top:684.3px">Großmeister</div>
<div class="btn" style="left:590px;top:737.5px;width:91.5px;height:19.5px;line-height:17.5px"><span>Hilfe</span></div>
<div class="btn" style="left:1051.5px;top:737.5px;width:91px;height:19.5px;line-height:17.5px"><span>Abbrechen</span></div>
<svg class="a" style="left:695px;top:205px" width="110" height="110" viewBox="0 0 874 874"><path d="M100 58C70 110 85 185 160 228C200 245 250 245 288 240L288 180C240 190 190 185 150 160C120 135 108 100 100 58Z" fill="#b5b2a9" /><path d="M790 58 C820 110 805 185 730 228 C690 245 640 245 602 240 L602 180 C650 190 700 185 740 160 C770 135 782 100 790 58 Z" fill="#b5b2a9" /><path d="M100 58C80 95 82 140 105 178L136 150C118 125 108 95 100 58Z" fill="#7d7b79" /><path d="M790 58 C810 95 808 140 785 178 L754 150 C772 125 782 95 790 58 Z" fill="#7d7b79" /><path d="M82 292C130 270 200 265 255 275L262 340C230 370 200 385 180 380C140 365 100 330 82 292Z" fill="#2b2b31" /><path d="M808 292 C760 270 690 265 635 275 L628 340 C660 370 690 385 710 380 C750 365 790 330 808 292 Z" fill="#2b2b31" /><path d="M290 160C340 110 550 110 600 160C640 200 650 260 640 300C690 380 720 480 700 560C680 650 600 760 445 848C290 760 210 650 190 560C170 480 200 380 250 300C240 260 250 200 290 160Z" fill="#3a3a42" /><path d="M300 165C350 125 540 125 590 165C620 210 620 280 600 330L520 350L445 330L370 350L290 330C270 280 270 210 300 165Z" fill="#58585f" /><path d="M370 350L520 350L560 470L445 450L330 470Z" fill="#4b4b53" /><path d="M275 335L380 375L370 412L290 400Z" fill="#1c1c22" /><path d="M615 335 L510 375 L520 412 L600 400 Z" fill="#1c1c22" /><ellipse cx="325" cy="384" rx="26" ry="17" fill="#e9e3c5"/><circle cx="331" cy="384" r="10" fill="#16161a"/><ellipse cx="565" cy="384" rx="26" ry="17" fill="#e9e3c5"/><circle cx="559" cy="384" r="10" fill="#16161a"/><path d="M230 640C300 720 380 700 445 690C510 700 590 720 660 640C620 740 540 800 445 848C350 800 270 740 230 640Z" fill="#121217" /><path d="M310 600C315 540 340 490 370 470C410 445 480 445 520 470C550 490 575 540 580 600C560 640 500 655 445 655C390 655 330 640 310 600Z" fill="#a39380" /><path d="M365 515C380 490 420 485 445 500C470 485 510 490 525 515C525 545 490 560 470 555L445 580L420 555C400 560 365 545 365 515Z" fill="#5c4742" /><ellipse cx="396" cy="522" rx="21" ry="14" fill="#2a1c1c"/><ellipse cx="494" cy="522" rx="21" ry="14" fill="#2a1c1c"/><path d="M335 625C380 600 510 600 555 625C540 665 490 680 445 680C400 680 350 665 335 625Z" fill="#33363f" /></svg><svg class="a" style="left:810px;top:205px" width="110" height="110" viewBox="0 0 874 874"><path d="M165 68C150 150 165 260 215 335L345 285L375 205C310 150 230 95 165 68Z" fill="#e9803e" /><path d="M725 68 C740 150 725 260 675 335 L545 285 L515 205 C580 150 660 95 725 68 Z" fill="#e9803e" /><path d="M182 105C175 170 190 240 225 295L300 270L330 215C285 170 230 130 182 105Z" fill="#2a1418" /><path d="M708 105 C715 170 700 240 665 295 L590 270 L560 215 C605 170 660 130 708 105 Z" fill="#2a1418" /><path d="M225 150C260 175 300 205 325 225L300 285L262 300C240 260 228 200 225 150Z" fill="#f7efe8" /><path d="M665 150 C630 175 590 205 565 225 L590 285 L628 300 C650 260 662 200 665 150 Z" fill="#f7efe8" /><path d="M345 230C400 190 490 190 545 230C640 280 720 380 745 470C700 520 600 560 445 560C290 560 190 520 145 470C170 380 250 280 345 230Z" fill="#e2692a" /><path d="M410 220C430 210 460 210 480 220L470 420L445 520L420 420Z" fill="#f19050" /><path d="M250 415C310 395 370 420 402 485C360 505 295 490 250 415Z" fill="#a8431a" /><path d="M640 415 C580 395 520 420 488 485 C530 505 595 490 640 415 Z" fill="#a8431a" /><ellipse cx="335" cy="458" rx="34" ry="23" fill="#2a120c"/><circle cx="338" cy="458" r="17" fill="#d98a20"/><circle cx="338" cy="458" r="8" fill="#1a0a08"/><ellipse cx="555" cy="458" rx="34" ry="23" fill="#2a120c"/><circle cx="552" cy="458" r="17" fill="#d98a20"/><circle cx="552" cy="458" r="8" fill="#1a0a08"/><path d="M150 500C220 520 300 510 370 540C390 500 420 490 445 490C470 490 500 500 520 540C590 510 670 520 740 500C720 560 680 600 650 640C620 720 560 770 445 838C330 770 270 720 240 640C210 600 170 560 150 500Z" fill="#f8f4f0" /><path d="M300 700C360 740 400 770 445 800C490 770 530 740 590 700C560 770 500 805 445 838C390 805 330 770 300 700Z" fill="#ddd3ce" /><ellipse cx="445" cy="585" rx="82" ry="78" fill="#fdf9f4"/><circle cx="447" cy="592" r="36" fill="#3a1218"/><circle cx="437" cy="580" r="8" fill="#7a4a50"/></svg><svg class="a" style="left:930px;top:205px" width="110" height="110" viewBox="0 0 874 874"><path d="M215 165C150 230 70 340 58 430C55 520 110 610 195 655C235 620 245 540 235 470C225 380 215 280 215 165Z" fill="#c27a3e" /><path d="M640 165C720 230 800 340 812 430C815 520 780 610 700 658C650 620 640 540 645 470C655 380 650 280 640 165Z" fill="#c98040" /><path d="M215 200C190 300 185 420 215 560C230 500 235 400 225 300Z" fill="#8a4a22" /><path d="M245 540C270 600 320 650 380 670L300 805L225 805C235 720 240 620 245 540Z" fill="#1c1418" /><path d="M590 560L660 720L600 740L560 640Z" fill="#1c1418" /><path d="M590 640C640 700 670 750 682 805L500 805C540 760 570 700 590 640Z" fill="#a85a2a" /><path d="M300 640C360 690 520 690 580 600L600 700L520 805L285 805Z" fill="#f3ede6" /><path d="M300 500L595 500L590 690L300 700Z" fill="#f0eae2" /><path d="M235 140C290 90 380 72 425 72C480 72 570 90 620 140C660 200 660 320 630 400L230 400C200 320 200 200 235 140Z" fill="#d2803f" /><path d="M225 230C250 180 340 180 370 250C380 320 340 380 280 390C230 380 215 300 225 230Z" fill="#8f4c24" /><path d="M480 250C500 180 600 180 630 240C640 300 620 380 570 390C510 380 475 320 480 250Z" fill="#b5652e" /><path d="M393 78C410 70 440 70 455 78C455 160 470 240 510 320L350 320C380 240 395 160 393 78Z" fill="#f8f3ec" /><path d="M245 450C270 380 350 320 430 320C510 320 590 380 605 450C600 540 520 630 430 630C340 630 260 540 245 450Z" fill="#f6f1ea" /><ellipse cx="420" cy="415" rx="78" ry="60" fill="#3b2321"/><ellipse cx="400" cy="393" rx="25" ry="11" fill="#6a4a48"/><path d="M285 480C340 540 500 540 585 470C570 560 500 610 430 610C360 610 300 560 285 480Z" fill="#3a1a1a" /><ellipse cx="425" cy="552" rx="68" ry="33" fill="#f48fa0"/><circle cx="295" cy="265" r="46" fill="#2a1512"/><circle cx="295" cy="265" r="34" fill="#6a2a20"/><circle cx="295" cy="265" r="22" fill="#120a0a"/><circle cx="280" cy="248" r="10" fill="#fff"/><circle cx="545" cy="260" r="46" fill="#2a1512"/><circle cx="545" cy="260" r="34" fill="#6a2a20"/><circle cx="545" cy="260" r="22" fill="#120a0a"/><circle cx="530" cy="243" r="10" fill="#fff"/></svg><svg class="a" style="left:690px;top:320px" width="120" height="120" viewBox="0 0 874 874"><path d="M215 408C140 430 90 480 70 560C50 650 40 740 40 830L195 830C205 740 225 650 235 560Z" fill="#c5710f" /><path d="M590 418C660 440 705 500 725 580C745 660 755 740 757 830L610 830C615 760 630 700 650 640C640 560 620 480 590 418Z" fill="#c5710f" /><path d="M245 380C300 420 500 420 555 380L600 470L480 630L380 570L230 470Z" fill="#e0820f" /><path d="M222 412C235 470 240 520 215 600C200 660 215 760 225 830L600 830C600 760 620 700 650 640C665 570 620 480 585 420C580 480 540 570 480 628C440 590 380 570 330 550C280 520 240 470 222 412Z" fill="#17573f" /><path d="M170 40C220 70 300 85 400 78C500 85 580 75 635 45C625 100 600 140 580 165C620 230 610 310 560 360C510 400 460 410 400 410C340 410 280 400 240 360C190 310 180 230 225 160C200 130 180 90 170 40Z" fill="#d97c12" /><path d="M265 150C320 165 380 200 410 240C440 200 500 170 560 160L550 190C500 200 450 225 415 270C380 225 320 195 272 180Z" fill="#b05c0c" /><circle cx="340" cy="228" r="44" fill="#c98f12"/><circle cx="342" cy="230" r="27" fill="#3a2a12"/><circle cx="334" cy="221" r="7" fill="#e8d8a0"/><circle cx="505" cy="232" r="42" fill="#c98f12"/><circle cx="503" cy="234" r="26" fill="#3a2a12"/><circle cx="496" cy="225" r="7" fill="#e8d8a0"/><path d="M430 235L470 300L440 348L395 300Z" fill="#3a5a46" /><path d="M355 340C390 372 450 372 495 335" stroke="#a85a0c" stroke-width="6" fill="none"/></svg><svg class="a" style="left:815px;top:325px" width="110" height="110" viewBox="0 0 874 874"><path d="M95 520C90 300 230 110 420 110C610 110 760 300 750 520L720 600L130 600Z" fill="#8d8054" /><path d="M140 480C150 300 260 160 420 150C580 160 690 300 700 480Z" fill="#b3a574" /><path d="M285 170C330 110 510 110 560 170L520 200L320 200Z" fill="#cfc494" /><path d="M145 470C200 420 270 420 300 470L320 640C280 680 160 700 100 690C90 640 100 540 145 470Z" fill="#a3c793" /><path d="M700 470C645 420 575 420 545 470L525 640C565 680 685 700 745 690C755 640 745 540 700 470Z" fill="#a3c793" /><path d="M300 460C340 440 500 440 545 460C575 540 570 620 540 655L305 655C275 620 270 540 300 460Z" fill="#d6c692" /><ellipse cx="420" cy="315" rx="200" ry="160" fill="#a9d09a"/><path d="M285 335C350 370 490 370 560 335C545 400 490 425 420 425C350 425 300 400 285 335Z" fill="#6a1f24" /><path d="M340 395C380 370 470 370 510 395C480 420 450 425 420 425C390 425 365 420 340 395Z" fill="#f3a092" /><ellipse cx="300" cy="255" rx="33" ry="44" fill="#fff"/><ellipse cx="305" cy="258" rx="22" ry="32" fill="#16161a"/><circle cx="298" cy="243" r="7" fill="#fff"/><ellipse cx="535" cy="255" rx="33" ry="44" fill="#fff"/><ellipse cx="530" cy="258" rx="22" ry="32" fill="#16161a"/><circle cx="523" cy="243" r="7" fill="#fff"/></svg><svg class="a" style="left:930px;top:325px" width="110" height="110" viewBox="0 0 874 874"><ellipse cx="200" cy="265" rx="122" ry="178" fill="#e9e4e1" transform="rotate(-24 200 265)"/><ellipse cx="222" cy="285" rx="72" ry="130" fill="#f4bec1" transform="rotate(-24 222 285)"/><ellipse cx="665" cy="265" rx="122" ry="178" fill="#e9e4e1" transform="rotate(24 665 265)"/><ellipse cx="643" cy="285" rx="72" ry="130" fill="#f4bec1" transform="rotate(24 643 285)"/><path d="M268 772C275 700 310 650 360 630L500 630C560 650 600 700 612 772Z" fill="#e4e0dd" /><ellipse cx="430" cy="650" rx="100" ry="25" fill="#bdb6c2"/><ellipse cx="430" cy="452" rx="207" ry="192" fill="#dfdbd8"/><ellipse cx="430" cy="570" rx="105" ry="48" fill="#f8f2e8"/><ellipse cx="335" cy="440" rx="38" ry="46" fill="#2a1418"/><circle cx="322" cy="420" r="12" fill="#fff"/><ellipse cx="530" cy="440" rx="38" ry="46" fill="#2a1418"/><circle cx="517" cy="420" r="12" fill="#fff"/><path d="M400 495L470 495L435 535Z" fill="#f08a9c" /><path d="M405 595L460 595L432 640Z" fill="#e0707e" /><path d="M120 540L300 560M150 625L300 585M750 540L565 560M720 625L565 585" stroke="#cbbfc6" stroke-width="3" fill="none"/></svg><svg class="a" style="left:700px;top:436px" width="120" height="120" viewBox="0 0 874 874"><path d="M155 45C140 110 150 190 185 255L300 150C260 100 200 60 155 45Z" fill="#cfa84a" /><path d="M170 80C165 130 175 180 200 225L270 160C240 120 200 95 170 80Z" fill="#e3b384" /><path d="M595 55C610 120 590 200 545 262L455 158C500 110 550 75 595 55Z" fill="#cfa84a" /><path d="M580 90C588 140 572 190 545 232L485 165C515 130 550 105 580 90Z" fill="#e3b384" /><path d="M120 835C105 720 115 620 150 565C200 530 260 525 290 530L360 560L440 530C500 525 560 540 595 575C625 640 625 740 622 835Z" fill="#2f3a16" /><ellipse cx="200" cy="690" rx="40" ry="60" fill="#3b4720"/><ellipse cx="400" cy="720" rx="50" ry="55" fill="#3b4720"/><ellipse cx="530" cy="600" rx="35" ry="25" fill="#434f22"/><path d="M270 535L455 535C430 600 350 680 285 775C240 700 230 610 270 535Z" fill="#c9a444" /><path d="M285 440L445 440L450 540L275 540Z" fill="#bf9a3c" /><path d="M275 480C330 500 400 500 452 478L452 525C400 545 330 545 275 527Z" fill="#2a3414" /><path d="M185 250C210 170 290 120 370 120C450 120 520 170 545 260C565 340 520 420 440 455C400 475 300 475 260 455C190 420 150 340 185 250Z" fill="#cda845" /><ellipse cx="255" cy="297" rx="36" ry="22" fill="#3a3a14"/><ellipse cx="258" cy="298" rx="20" ry="16" fill="#6a7a30"/><path d="M395 310C420 325 455 318 478 295" stroke="#4a3010" stroke-width="8" fill="none"/><path d="M215 255C245 235 285 240 305 260M400 260C430 235 470 240 495 265" stroke="#a07c28" stroke-width="6" fill="none"/><path d="M312 355L350 355L332 380Z" fill="#d88a7a" /><path d="M262 395C300 440 400 430 445 375" stroke="#8a4a28" stroke-width="6" fill="none"/><path d="M300 415C330 405 370 405 395 410C375 440 325 445 300 415Z" fill="#c9706a" /></svg><svg class="a" style="left:820px;top:436px" width="120" height="120" viewBox="0 0 874 874"><path d="M400 95C480 110 560 180 570 290C575 400 520 500 400 545Z" fill="#1d191b" /><ellipse cx="555" cy="305" rx="42" ry="58" fill="#3d3d3f"/><ellipse cx="562" cy="305" rx="22" ry="40" fill="#1a1a1c"/><path d="M300 88C380 88 470 170 472 300C474 420 380 545 290 548C220 540 140 420 138 300C140 190 220 90 300 88Z" fill="#4b6b79" /><circle cx="185" cy="300" r="70" fill="#2a2420"/><circle cx="185" cy="300" r="56" fill="#e9c56b"/><circle cx="205" cy="302" r="25" fill="#111"/><circle cx="365" cy="285" r="74" fill="#2a2420"/><circle cx="365" cy="285" r="60" fill="#e9c56b"/><circle cx="382" cy="284" r="27" fill="#111"/><path d="M212 462C260 490 350 480 402 425" stroke="#1c2c34" stroke-width="8" fill="none"/><ellipse cx="262" cy="398" rx="14" ry="8" fill="#2c4450"/><path d="M340 540L425 540L415 660L350 660Z" fill="#262224" /><path d="M290 660C330 640 430 640 470 660L470 705L290 705Z" fill="#343234" /><rect x="225" y="705" width="255" height="130" fill="#41606c"/><rect x="440" y="705" width="42" height="130" fill="#2a2a2c"/><rect x="285" y="750" width="40" height="50" fill="#c9a050"/><rect x="135" y="715" width="82" height="112" rx="30" fill="#3b525b"/><rect x="490" y="715" width="110" height="112" rx="30" fill="#3b525b"/><path d="M237 60L245 95M480 50L475 100" stroke="#9a6a7a" stroke-width="5" fill="none"/></svg><svg class="a" style="left:925px;top:436px" width="120" height="120" viewBox="0 0 874 874"><path d="M30 835C45 720 70 620 110 560C180 520 260 480 310 450L420 520L515 450C570 480 640 520 690 560C740 620 775 720 792 835Z" fill="#484848" /><path d="M305 455L205 575L255 610L215 640L320 835L350 835L330 560Z" fill="#575757" /><path d="M520 455L625 575L580 610L620 640L530 835L500 835L515 560Z" fill="#575757" /><path d="M325 540L520 540L525 835L320 835Z" fill="#2e2e2e" /><path d="M312 440C350 470 480 470 512 440L500 560L415 765L340 560Z" fill="#ececec" /><path d="M350 520C380 510 410 530 430 545C455 525 480 510 508 522L505 615C480 620 455 600 432 580C410 600 380 620 355 612Z" fill="#262626" /><path d="M232 270C215 180 270 70 420 45C560 60 620 170 603 275C598 310 570 325 548 318L540 200C500 150 350 150 305 200L298 318C270 325 240 310 232 270Z" fill="#2a2a2a" /><path d="M300 230C300 170 360 140 420 140C490 140 545 170 545 235C548 330 520 440 420 478C330 440 298 330 300 230Z" fill="#cfcfcf" /><path d="M470 160C530 180 548 230 545 300C540 380 500 450 420 478C480 420 500 330 490 250Z" fill="#adadad" /><path d="M298 240C300 150 360 100 420 95C500 100 550 150 548 240C520 180 480 160 420 158C360 160 320 185 298 240Z" fill="#2c2c2c" /><ellipse cx="355" cy="277" rx="26" ry="10" fill="#3a3a3a"/><ellipse cx="492" cy="277" rx="26" ry="10" fill="#3a3a3a"/><path d="M325 252C345 242 375 244 390 254M460 254C478 244 505 242 525 254" stroke="#444" stroke-width="7" fill="none"/><path d="M415 290L405 345L440 350" stroke="#909090" stroke-width="6" fill="none"/><path d="M368 388C400 398 440 398 472 384" stroke="#5a5a5a" stroke-width="7" fill="none"/></svg>
<svg class="a" style="left:1412.5px;top:650.4px" width="19" height="19" viewBox="0 0 45 45"><g fill="none" fill-rule="evenodd" stroke="#1a1a1a" stroke-width="1.25" stroke-linecap="round" stroke-linejoin="round" ><path d="M 22.5,11.63 L 22.5,6" stroke-linejoin="miter"/><path d="M 20,8 L 25,8" stroke-linejoin="miter"/><path d="M 22.5,25 C 22.5,25 27,17.5 25.5,14.5 C 25.5,14.5 24.5,12 22.5,12 C 20.5,12 19.5,14.5 19.5,14.5 C 18,17.5 22.5,25 22.5,25" fill="url(#wg)" stroke-linecap="butt" stroke-linejoin="miter"/><path d="M 12.5,37 C 18,40.5 27,40.5 32.5,37 L 32.5,30 C 32.5,30 41.5,25.5 38.5,19.5 C 34.5,13 25,16 22.5,23.5 L 22.5,27 L 22.5,23.5 C 20,16 10.5,13 6.5,19.5 C 3.5,25.5 12.5,30 12.5,30 L 12.5,37" fill="url(#wg)"/><path d="M 12.5,30 C 18,27 27,27 32.5,30"/><path d="M 12.5,33.5 C 18,30.5 27,30.5 32.5,33.5"/><path d="M 12.5,37 C 18,34 27,34 32.5,37"/></g></svg>
<svg class="a" style="left:1498.2px;top:650.4px" width="19" height="19" viewBox="0 0 45 45"><g fill="none" fill-rule="evenodd" stroke="#1a1a1a" stroke-width="1.25" stroke-linecap="round" stroke-linejoin="round" ><path d="M 22.5,11.63 L 22.5,6" stroke-linejoin="miter"/><path d="M 20,8 L 25,8" stroke-linejoin="miter"/><path d="M 22.5,25 C 22.5,25 27,17.5 25.5,14.5 C 25.5,14.5 24.5,12 22.5,12 C 20.5,12 19.5,14.5 19.5,14.5 C 18,17.5 22.5,25 22.5,25" fill="url(#kg)" stroke-linecap="butt" stroke-linejoin="miter"/><path d="M 12.5,37 C 18,40.5 27,40.5 32.5,37 L 32.5,30 C 32.5,30 41.5,25.5 38.5,19.5 C 34.5,13 25,16 22.5,23.5 L 22.5,27 L 22.5,23.5 C 20,16 10.5,13 6.5,19.5 C 3.5,25.5 12.5,30 12.5,30 L 12.5,37" fill="url(#kg)"/><g stroke="#f0f0f0" stroke-width="1.5"><path d="M 32,29.5 C 32,29.5 40.5,25.5 38.03,19.85 C 34.15,14 25,18 22.5,24.5 L 22.5,26.6 L 22.5,24.5 C 20,18 10.85,14 6.97,19.85 C 4.5,25.5 13,29.5 13,29.5"/><path d="M 12.5,30 C 18,27 27,27 32.5,30 M 12.5,33.5 C 18,30.5 27,30.5 32.5,33.5 M 12.5,37 C 18,34 27,34 32.5,37"/></g></g></svg>
<div class="a" style="left:1435.8px;top:653.1px;width:15px;height:15px;border-radius:50%;background:radial-gradient(circle,#6cc644 55%,#6cc644cc 80%,#6cc64488 100%)"></div>
<div class="a" style="left:1521.1px;top:653.1px;width:15px;height:15px;border-radius:50%;background:radial-gradient(circle,#4fc845 55%,#4fc845cc 80%,#4fc84588 100%)"></div>
<svg class="a" style="left:1412.5px;top:669.4px" width="19" height="19" viewBox="0 0 45 45"><g fill="none" fill-rule="evenodd" stroke="#1a1a1a" stroke-width="1.25" stroke-linecap="round" stroke-linejoin="round" ><g fill="url(#wg)"><path d="M 9,26 C 17.5,24.5 30,24.5 36,26 L 38.5,13.5 L 31,25 L 30.7,10.9 L 25.5,24.5 L 22.5,10 L 19.5,24.5 L 14.3,10.9 L 14,25 L 6.5,13.5 L 9,26 z"/><path d="M 9,26 C 9,28 10.5,28 11.5,30 C 12.5,31.5 12.5,31 12,33.5 C 10.5,34.5 11,36 11,36 C 9.5,37.5 11,38.5 11,38.5 C 17.5,39.5 27.5,39.5 34,38.5 C 34,38.5 35.5,37.5 34,36 C 34,36 34.5,34.5 33,33.5 C 32.5,31 32.5,31.5 33.5,30 C 34.5,28 36,28 36,26 C 27.5,24.5 17.5,24.5 9,26 z"/><circle cx="6" cy="12" r="2"/><circle cx="14" cy="9" r="2"/><circle cx="22.5" cy="8" r="2"/><circle cx="31" cy="9" r="2"/><circle cx="39" cy="12" r="2"/></g><path d="M 11.5,30 C 15,29 30,29 33.5,30"/><path d="M 12,33.5 C 18,32.5 27,32.5 33,33.5"/><path d="M 11,36 C 17,35 28,35 34,36"/></g></svg>
<svg class="a" style="left:1498.2px;top:669.4px" width="19" height="19" viewBox="0 0 45 45"><g fill="none" fill-rule="evenodd" stroke="#1a1a1a" stroke-width="1.25" stroke-linecap="round" stroke-linejoin="round" ><g fill="url(#kg)"><path d="M 9,26 C 17.5,24.5 30,24.5 36,26 L 38.5,13.5 L 31,25 L 30.7,10.9 L 25.5,24.5 L 22.5,10 L 19.5,24.5 L 14.3,10.9 L 14,25 L 6.5,13.5 L 9,26 z" stroke-linecap="butt"/><path d="m 9,26 c 0,2 1.5,2 2.5,4 1,1.5 1,1 0.5,3.5 -1.5,1 -1,2.5 -1,2.5 -1.5,1.5 0,2.5 0,2.5 6.5,1 16.5,1 23,0 0,0 1.5,-1 0,-2.5 0,0 0.5,-1.5 -1,-2.5 -0.5,-2.5 -0.5,-2 0.5,-3.5 1,-2 2.5,-2 2.5,-4 -8.5,-1.5 -18.5,-1.5 -27,0 z"/><circle cx="6" cy="12" r="2"/><circle cx="14" cy="9" r="2"/><circle cx="22.5" cy="8" r="2"/><circle cx="31" cy="9" r="2"/><circle cx="39" cy="12" r="2"/></g><g stroke="#f0f0f0" stroke-width="1.1"><path d="M 11.5,30.5 C 15,29.5 30,29.5 33.5,30.5"/><path d="M 12.5,33.5 C 18,32.6 27,32.6 32.5,33.5"/><path d="M 11.5,36.3 C 17,35.4 28,35.4 33.5,36.3"/></g></g></svg>
<div class="a" style="left:1435.8px;top:672.1px;width:15px;height:15px;border-radius:50%;background:radial-gradient(circle,#b5cf3f 55%,#b5cf3fcc 80%,#b5cf3f88 100%)"></div>
<div class="a" style="left:1521.1px;top:672.1px;width:15px;height:15px;border-radius:50%;background:radial-gradient(circle,#d5d538 55%,#d5d538cc 80%,#d5d53888 100%)"></div>
<svg class="a" style="left:1412.5px;top:688.5px" width="19" height="19" viewBox="0 0 45 45"><g fill="none" fill-rule="evenodd" stroke="#1a1a1a" stroke-width="1.25" stroke-linecap="round" stroke-linejoin="round" ><g fill="url(#wg)" stroke-linecap="butt"><path d="M 9,39 L 36,39 L 36,36 L 9,36 L 9,39 z"/><path d="M 12,36 L 12,32 L 33,32 L 33,36 L 12,36 z"/><path d="M 11,14 L 11,9 L 15,9 L 15,11 L 20,11 L 20,9 L 25,9 L 25,11 L 30,11 L 30,9 L 34,9 L 34,14"/><path d="M 34,14 L 31,17 L 14,17 L 11,14"/><path d="M 31,17 L 31,29.5 L 14,29.5 L 14,17" stroke-linejoin="miter"/><path d="M 31,29.5 L 32.5,32 L 12.5,32 L 14,29.5"/></g><path d="M 11,14 L 34,14" stroke-linejoin="miter"/></g></svg>
<svg class="a" style="left:1498.2px;top:688.5px" width="19" height="19" viewBox="0 0 45 45"><g fill="none" fill-rule="evenodd" stroke="#1a1a1a" stroke-width="1.25" stroke-linecap="round" stroke-linejoin="round" ><g fill="url(#kg)" stroke-linecap="butt"><path d="M 9,39 L 36,39 L 36,36 L 9,36 L 9,39 z"/><path d="M 12.5,32 L 14,29.5 L 31,29.5 L 32.5,32 L 12.5,32 z"/><path d="M 12,36 L 12,32 L 33,32 L 33,36 L 12,36 z"/><path d="M 14,29.5 L 14,16.5 L 31,16.5 L 31,29.5 L 14,29.5 z" stroke-linejoin="miter"/><path d="M 14,16.5 L 11,14 L 34,14 L 31,16.5 L 14,16.5 z"/><path d="M 11,14 L 11,9 L 15,9 L 15,11 L 20,11 L 20,9 L 25,9 L 25,11 L 30,11 L 30,9 L 34,9 L 34,14 L 11,14 z"/></g><g stroke="#f0f0f0" stroke-width="1" stroke-linejoin="miter"><path d="M 12,35.5 L 33,35.5"/><path d="M 13,31.5 L 32,31.5"/><path d="M 14,29.5 L 31,29.5"/><path d="M 14,16.5 L 31,16.5"/><path d="M 11,14 L 34,14"/></g></g></svg>
<div class="a" style="left:1435.8px;top:691.2px;width:15px;height:15px;border-radius:50%;background:radial-gradient(circle,#e4604a 55%,#e4604acc 80%,#e4604a88 100%)"></div>
<div class="a" style="left:1456.9px;top:691.2px;width:15px;height:15px;border-radius:50%;background:radial-gradient(circle,#e0903c 55%,#e0903ccc 80%,#e0903c88 100%)"></div>
<div class="a" style="left:1521.1px;top:691.2px;width:15px;height:15px;border-radius:50%;background:radial-gradient(circle,#e09a40 55%,#e09a40cc 80%,#e09a4088 100%)"></div>
<div class="a" style="left:1542.0px;top:691.2px;width:15px;height:15px;border-radius:50%;background:radial-gradient(circle,#e09a40 55%,#e09a40cc 80%,#e09a4088 100%)"></div>
<svg class="a" style="left:1412.5px;top:707.7px" width="19" height="19" viewBox="0 0 45 45"><g fill="none" fill-rule="evenodd" stroke="#1a1a1a" stroke-width="1.25" stroke-linecap="round" stroke-linejoin="round" ><g fill="url(#wg)" stroke-linecap="butt"><path d="M 8.5,35.3 C 12,34.1 19,35.8 22.5,33.2 C 26,35.8 33,34.1 36.5,35.3 C 38,35.8 39.3,36.8 40,38 C 39,39.7 37.5,39.7 36,39.1 C 32.5,37.9 26,39.7 22.5,38 C 19,39.7 12.5,37.9 9,39.1 C 7.5,39.7 6,39.7 5,38 C 5.7,36.8 7,35.8 8.5,35.3 z"/><path d="M 15,32 C 17.5,34.5 27.5,34.5 30,32 C 30.5,30.5 30,30 30,30 C 30,27.5 27.5,26 27.5,26 C 33,24.5 33.5,14.5 22.5,10.5 C 11.5,14.5 12,24.5 17.5,26 C 17.5,26 15,27.5 15,30 C 15,30 14.5,30.5 15,32 z"/><path d="M 25 8 A 2.5 2.5 0 1 1 20,8 A 2.5 2.5 0 1 1 25 8 z"/></g><path d="M 17.5,26 L 27.5,26 M 15,30 L 30,30 M 22.5,15.5 L 22.5,20.5 M 20,18 L 25,18" stroke="#1a1a1a" stroke-linejoin="miter"/></g></svg>
<svg class="a" style="left:1498.2px;top:707.7px" width="19" height="19" viewBox="0 0 45 45"><g fill="none" fill-rule="evenodd" stroke="#1a1a1a" stroke-width="1.25" stroke-linecap="round" stroke-linejoin="round" ><g fill="url(#kg)" stroke-linecap="butt"><path d="M 8.5,35.3 C 12,34.1 19,35.8 22.5,33.2 C 26,35.8 33,34.1 36.5,35.3 C 38,35.8 39.3,36.8 40,38 C 39,39.7 37.5,39.7 36,39.1 C 32.5,37.9 26,39.7 22.5,38 C 19,39.7 12.5,37.9 9,39.1 C 7.5,39.7 6,39.7 5,38 C 5.7,36.8 7,35.8 8.5,35.3 z"/><path d="M 15,32 C 17.5,34.5 27.5,34.5 30,32 C 30.5,30.5 30,30 30,30 C 30,27.5 27.5,26 27.5,26 C 33,24.5 33.5,14.5 22.5,10.5 C 11.5,14.5 12,24.5 17.5,26 C 17.5,26 15,27.5 15,30 C 15,30 14.5,30.5 15,32 z"/><path d="M 25 8 A 2.5 2.5 0 1 1 20,8 A 2.5 2.5 0 1 1 25 8 z"/></g><path d="M 17.5,26 L 27.5,26 M 15,30 L 30,30 M 22.5,15.5 L 22.5,20.5 M 20,18 L 25,18" stroke="#f0f0f0" stroke-linejoin="miter"/></g></svg>
<div class="a" style="left:1435.8px;top:710.4px;width:15px;height:15px;border-radius:50%;background:radial-gradient(circle,#4fcf90 55%,#4fcf90cc 80%,#4fcf9088 100%)"></div>
<div class="a" style="left:1456.9px;top:710.4px;width:15px;height:15px;border-radius:50%;background:radial-gradient(circle,#7fcf4a 55%,#7fcf4acc 80%,#7fcf4a88 100%)"></div>
<div class="a" style="left:1521.1px;top:710.4px;width:15px;height:15px;border-radius:50%;background:radial-gradient(circle,#e0a040 55%,#e0a040cc 80%,#e0a04088 100%)"></div>
<div class="a" style="left:1542.0px;top:710.4px;width:15px;height:15px;border-radius:50%;background:radial-gradient(circle,#e4684a 55%,#e4684acc 80%,#e4684a88 100%)"></div>
<svg class="a" style="left:1412.5px;top:726.8px" width="19" height="19" viewBox="0 0 45 45"><g fill="none" fill-rule="evenodd" stroke="#1a1a1a" stroke-width="1.25" stroke-linecap="round" stroke-linejoin="round" ><path d="M 22,10 C 32.5,11 38.5,18 38,39 L 15,39 C 15,30 25,32.5 23,18" fill="url(#wg)"/><path d="M 24,18 C 24.38,20.91 18.45,25.37 16,27 C 13,29 13.18,31.34 11,31 C 9.958,30.06 12.41,27.96 11,28 C 10,28 11.19,29.23 10,30 C 9,30 5.997,31 6,26 C 6,24 12,14 12,14 C 12,14 13.89,12.1 14,10.5 C 13.27,9.506 13.5,8.5 13.5,7.5 C 14.5,6.5 16.5,10 16.5,10 L 18.5,10 C 18.5,10 19.28,8.008 21,7 C 22,7 22,10 22,10" fill="url(#wg)"/><path d="M 9.5 25.5 A 0.5 0.5 0 1 1 8.5,25.5 A 0.5 0.5 0 1 1 9.5 25.5 z" fill="#1a1a1a" stroke="#1a1a1a"/><path d="M 15 15.5 A 0.5 1.5 0 1 1 14,15.5 A 0.5 1.5 0 1 1 15 15.5 z" transform="matrix(0.866,0.5,-0.5,0.866,9.693,-5.173)" fill="#1a1a1a" stroke="#1a1a1a"/></g></svg>
<svg class="a" style="left:1498.2px;top:726.8px" width="19" height="19" viewBox="0 0 45 45"><g fill="none" fill-rule="evenodd" stroke="#1a1a1a" stroke-width="1.25" stroke-linecap="round" stroke-linejoin="round" ><path d="M 22,10 C 32.5,11 38.5,18 38,39 L 15,39 C 15,30 25,32.5 23,18" fill="url(#kg)"/><path d="M 24,18 C 24.38,20.91 18.45,25.37 16,27 C 13,29 13.18,31.34 11,31 C 9.958,30.06 12.41,27.96 11,28 C 10,28 11.19,29.23 10,30 C 9,30 5.997,31 6,26 C 6,24 12,14 12,14 C 12,14 13.89,12.1 14,10.5 C 13.27,9.506 13.5,8.5 13.5,7.5 C 14.5,6.5 16.5,10 16.5,10 L 18.5,10 C 18.5,10 19.28,8.008 21,7 C 22,7 22,10 22,10" fill="url(#kg)"/><path d="M 9.5 25.5 A 0.5 0.5 0 1 1 8.5,25.5 A 0.5 0.5 0 1 1 9.5 25.5 z" fill="#f0f0f0" stroke="#f0f0f0"/><path d="M 15 15.5 A 0.5 1.5 0 1 1 14,15.5 A 0.5 1.5 0 1 1 15 15.5 z" transform="matrix(0.866,0.5,-0.5,0.866,9.693,-5.173)" fill="#f0f0f0" stroke="#f0f0f0"/><path d="M 24.55,10.4 L 24.1,11.85 L 24.6,12 C 27.75,13 30.25,14.49 32.5,18.75 C 34.75,23.01 35.75,29.06 35.25,39 L 35.2,39.5 L 37.45,39.5 L 37.5,39 C 38,28.94 36.62,22.15 34.25,17.66 C 31.88,13.17 28.46,11.02 25.06,10.5 L 24.55,10.4 z" fill="#f0f0f0" stroke="none"/></g></svg>
<div class="a" style="left:1435.8px;top:729.5px;width:15px;height:15px;border-radius:50%;background:radial-gradient(circle,#c0cc40 55%,#c0cc40cc 80%,#c0cc4088 100%)"></div>
<div class="a" style="left:1456.9px;top:729.5px;width:15px;height:15px;border-radius:50%;background:radial-gradient(circle,#3fc450 55%,#3fc450cc 80%,#3fc45088 100%)"></div>
<div class="a" style="left:1521.1px;top:729.5px;width:15px;height:15px;border-radius:50%;background:radial-gradient(circle,#e0504a 55%,#e0504acc 80%,#e0504a88 100%)"></div>
<div class="a" style="left:1542.0px;top:729.5px;width:15px;height:15px;border-radius:50%;background:radial-gradient(circle,#5fc848 55%,#5fc848cc 80%,#5fc84888 100%)"></div>
<svg class="a" style="left:1412.5px;top:746.0px" width="19" height="19" viewBox="0 0 45 45"><g fill="none" fill-rule="evenodd" stroke="#1a1a1a" stroke-width="1.25" stroke-linecap="round" stroke-linejoin="round" ><path d="m 22.5,9 c -2.21,0 -4,1.79 -4,4 0,0.89 0.29,1.71 0.78,2.38 C 17.33,16.5 16,18.59 16,21 c 0,2.03 0.94,3.84 2.41,5.03 C 15.41,27.09 11,31.58 11,39.5 H 34 C 34,31.58 29.59,27.09 26.59,26.03 28.06,24.84 29,23.03 29,21 29,18.59 27.67,16.5 25.72,15.38 26.21,14.71 26.5,13.89 26.5,13 c 0,-2.21 -1.79,-4 -4,-4 z" fill="url(#wg)"/></g></svg>
<svg class="a" style="left:1498.2px;top:746.0px" width="19" height="19" viewBox="0 0 45 45"><g fill="none" fill-rule="evenodd" stroke="#1a1a1a" stroke-width="1.25" stroke-linecap="round" stroke-linejoin="round" ><path d="m 22.5,9 c -2.21,0 -4,1.79 -4,4 0,0.89 0.29,1.71 0.78,2.38 C 17.33,16.5 16,18.59 16,21 c 0,2.03 0.94,3.84 2.41,5.03 C 15.41,27.09 11,31.58 11,39.5 H 34 C 34,31.58 29.59,27.09 26.59,26.03 28.06,24.84 29,23.03 29,21 29,18.59 27.67,16.5 25.72,15.38 26.21,14.71 26.5,13.89 26.5,13 c 0,-2.21 -1.79,-4 -4,-4 z" fill="url(#kg)"/></g></svg>
<div class="a" style="left:1435.8px;top:748.7px;width:15px;height:15px;border-radius:50%;background:radial-gradient(circle,#4fcf90 55%,#4fcf90cc 80%,#4fcf9088 100%)"></div>
<div class="a" style="left:1521.1px;top:748.7px;width:15px;height:15px;border-radius:50%;background:radial-gradient(circle,#4fcf70 55%,#4fcf70cc 80%,#4fcf7088 100%)"></div>
<svg class="a" style="left:1409px;top:766px" width="180" height="20" viewBox="1409 766 180 20"><polygon points="1427.6,775.1 1427.6,776.5 1425.8,777.0 1425.4,778.1 1426.3,779.6 1425.2,780.7 1423.7,779.8 1422.6,780.2 1422.1,782.0 1420.7,782.0 1420.2,780.2 1419.1,779.8 1417.6,780.7 1416.5,779.6 1417.4,778.1 1417.0,777.0 1415.2,776.5 1415.2,775.1 1417.0,774.6 1417.4,773.5 1416.5,772.0 1417.6,770.9 1419.1,771.8 1420.2,771.4 1420.7,769.6 1422.1,769.6 1422.6,771.4 1423.7,771.8 1425.2,770.9 1426.3,772.0 1425.4,773.5 1425.8,774.6" fill="#c9ccd4"/><circle cx="1421.4" cy="775.8" r="2" fill="#fff0df"/><polygon points="1443.2,775.1 1443.2,776.5 1441.4,777.0 1441.0,778.1 1441.9,779.6 1440.8,780.7 1439.3,779.8 1438.2,780.2 1437.7,782.0 1436.3,782.0 1435.8,780.2 1434.7,779.8 1433.2,780.7 1432.1,779.6 1433.0,778.1 1432.6,777.0 1430.8,776.5 1430.8,775.1 1432.6,774.6 1433.0,773.5 1432.1,772.0 1433.2,770.9 1434.7,771.8 1435.8,771.4 1436.3,769.6 1437.7,769.6 1438.2,771.4 1439.3,771.8 1440.8,770.9 1441.9,772.0 1441.0,773.5 1441.4,774.6" fill="#c9ccd4"/><circle cx="1437" cy="775.8" r="2" fill="#fff0df"/><polygon points="1512.9,775.1 1512.9,776.5 1511.1,777.0 1510.7,778.1 1511.6,779.6 1510.5,780.7 1509.0,779.8 1507.9,780.2 1507.4,782.0 1506.0,782.0 1505.5,780.2 1504.4,779.8 1502.9,780.7 1501.8,779.6 1502.7,778.1 1502.3,777.0 1500.5,776.5 1500.5,775.1 1502.3,774.6 1502.7,773.5 1501.8,772.0 1502.9,770.9 1504.4,771.8 1505.5,771.4 1506.0,769.6 1507.4,769.6 1507.9,771.4 1509.0,771.8 1510.5,770.9 1511.6,772.0 1510.7,773.5 1511.1,774.6" fill="#7d7f86"/><circle cx="1506.7" cy="775.8" r="2" fill="#fff0df"/><polygon points="1528.0,775.1 1528.0,776.5 1526.2,777.0 1525.8,778.1 1526.7,779.6 1525.6,780.7 1524.1,779.8 1523.0,780.2 1522.5,782.0 1521.1,782.0 1520.6,780.2 1519.5,779.8 1518.0,780.7 1516.9,779.6 1517.8,778.1 1517.4,777.0 1515.6,776.5 1515.6,775.1 1517.4,774.6 1517.8,773.5 1516.9,772.0 1518.0,770.9 1519.5,771.8 1520.6,771.4 1521.1,769.6 1522.5,769.6 1523.0,771.4 1524.1,771.8 1525.6,770.9 1526.7,772.0 1525.8,773.5 1526.2,774.6" fill="#7d7f86"/><circle cx="1521.8" cy="775.8" r="2" fill="#fff0df"/></svg>
<svg class="a" style="left:1413.6px;top:787.0px" width="18" height="21" viewBox="0 0 18 21"><path d="M9.5 .5C11 4 15.5 6.5 16.5 11C17.5 15.5 14 20 9 20C4 20 .8 16.5 1.5 12C2 9 3.5 8.5 4 6C5.5 7.5 5.8 9 6 10C7.5 7.5 10 4.5 9.5 .5Z" fill="#f08a1c" stroke="#a33a10" stroke-width=".9"/><path d="M9.5 8C10.5 10.5 13.5 12 13.5 15C13.5 17.8 11.5 19.3 9 19.3C6.5 19.3 4.5 17.8 4.8 15C5 13.3 6 12.8 6.3 11.5C7 12.5 7.3 13.3 7.5 14C8.3 12.5 9.8 10.5 9.5 8Z" fill="#ffd84a"/></svg>
<svg class="a" style="left:1435.8px;top:787.0px" width="18" height="21" viewBox="0 0 18 21"><path d="M9.5 .5C11 4 15.5 6.5 16.5 11C17.5 15.5 14 20 9 20C4 20 .8 16.5 1.5 12C2 9 3.5 8.5 4 6C5.5 7.5 5.8 9 6 10C7.5 7.5 10 4.5 9.5 .5Z" fill="#f08a1c" stroke="#a33a10" stroke-width=".9"/><path d="M9.5 8C10.5 10.5 13.5 12 13.5 15C13.5 17.8 11.5 19.3 9 19.3C6.5 19.3 4.5 17.8 4.8 15C5 13.3 6 12.8 6.3 11.5C7 12.5 7.3 13.3 7.5 14C8.3 12.5 9.8 10.5 9.5 8Z" fill="#ffd84a"/></svg>
<svg class="a" style="left:1457.9px;top:787.0px" width="18" height="21" viewBox="0 0 18 21"><path d="M9.5 .5C11 4 15.5 6.5 16.5 11C17.5 15.5 14 20 9 20C4 20 .8 16.5 1.5 12C2 9 3.5 8.5 4 6C5.5 7.5 5.8 9 6 10C7.5 7.5 10 4.5 9.5 .5Z" fill="#f08a1c" stroke="#a33a10" stroke-width=".9"/><path d="M9.5 8C10.5 10.5 13.5 12 13.5 15C13.5 17.8 11.5 19.3 9 19.3C6.5 19.3 4.5 17.8 4.8 15C5 13.3 6 12.8 6.3 11.5C7 12.5 7.3 13.3 7.5 14C8.3 12.5 9.8 10.5 9.5 8Z" fill="#ffd84a"/></svg>
<div class="a" style="left:1413px;top:811.5px;font-style:italic;font-size:11px;line-height:15px;color:#a3a09c;letter-spacing:.1px">Normal</div>
<div class="a" style="left:1568px;top:650px;width:16px;height:16.5px;background:#c91f2b;border:1px solid #e9b9b9"><svg width="14" height="14" viewBox="0 0 14 14" style="position:absolute;left:0;top:0"><path d="M3 3L11 11M11 3L3 11" stroke="#fff" stroke-width="2.6" stroke-linecap="round"/></svg></div>
<svg class="a" style="left:70px;top:35px" width="64" height="55" viewBox="0 0 1017 874" fill="none" stroke-linecap="round" stroke-linejoin="round"><path d="M432 588L278 200C262 160 290 135 325 135C360 135 385 155 396 190L462 420M455 340C460 300 490 282 520 282C550 282 566 300 566 330L570 390M566 310C575 270 600 255 625 258C650 262 660 280 660 305L662 350M660 300C680 270 720 262 750 280C790 305 800 350 810 400C830 500 830 560 790 630C740 715 640 740 560 725C520 718 490 705 470 695L215 585C180 565 195 510 245 512L432 588" stroke="#0a0a0a" stroke-width="50"/></svg>
<svg class="a" style="left:688.9px;top:107.1px" width="69.7" height="59.9" viewBox="0 0 1017 874" fill="none" stroke-linecap="round" stroke-linejoin="round"><path d="M432 588L278 200C262 160 290 135 325 135C360 135 385 155 396 190L462 420M455 340C460 300 490 282 520 282C550 282 566 300 566 330L570 390M566 310C575 270 600 255 625 258C650 262 660 280 660 305L662 350M660 300C680 270 720 262 750 280C790 305 800 350 810 400C830 500 830 560 790 630C740 715 640 740 560 725C520 718 490 705 470 695L215 585C180 565 195 510 245 512L432 588" stroke="#0a0a0a" stroke-width="50"/></svg>
</body></html>
